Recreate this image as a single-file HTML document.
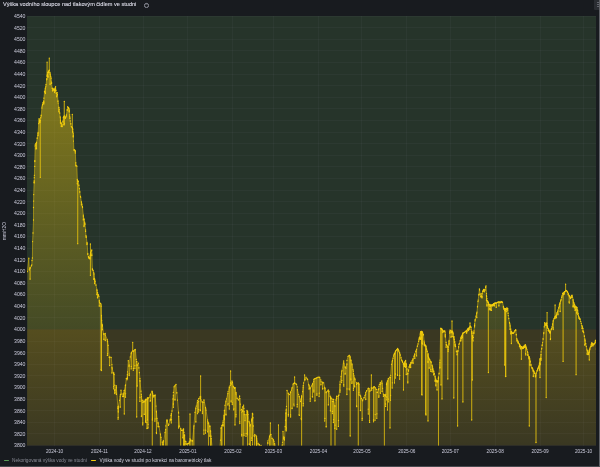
<!DOCTYPE html>
<html lang="cs"><head><meta charset="utf-8"><title>Výška vodního sloupce nad tlakovým čidlem ve studni</title>
<style>
html,body{margin:0;padding:0;background:#181b1f;}
body{width:600px;height:467px;overflow:hidden;position:relative;font-family:"Liberation Sans",sans-serif;color:#ccccdc;}
.panel{position:absolute;left:0;top:0;width:600px;height:467px;box-sizing:border-box;background:#181b1f;border-right:1.1px solid #606267;border-bottom:1.3px solid #484a4f;}
.title{position:absolute;left:2.9px;top:0.4px;font-size:5.58px;line-height:8px;font-weight:normal;color:#d8d8e4;-webkit-text-stroke:0.12px #d8d8e4;white-space:nowrap;letter-spacing:0;}
.info{position:absolute;left:143.6px;top:2.75px;width:2.7px;height:2.7px;border:0.4px solid #9496a0;border-radius:50%;font-size:2.6px;line-height:2.7px;text-align:center;color:#9d9fa8;}
.menu{position:absolute;left:594px;top:0;width:4.9px;height:10.1px;background:#2a2d32;border-radius:0 0 0 1px;overflow:hidden;}
.menu i{position:absolute;left:3px;width:3px;height:0.9px;background:#62656d;}
svg{position:absolute;left:0;top:0;will-change:transform;}
.title,.legend,.info{will-change:transform;}
.ax text{font-family:"Liberation Sans",sans-serif;font-size:5.17px;fill:#ccccdc;}
.legend{position:absolute;left:0;top:456.5px;font-size:4.78px;line-height:7px;white-space:nowrap;}
.legend span{position:absolute;top:0;}
.legend b{position:absolute;top:2.9px;width:5px;height:1.4px;border-radius:0.7px;}
</style></head><body>
<div class="panel">
<div class="title">Výška vodního sloupce nad tlakovým čidlem ve studni</div>
<div class="info">i</div>
<div class="menu"><i style="top:2px"></i><i style="top:3.9px"></i><i style="top:5.9px"></i></div>
<svg width="600" height="467" viewBox="0 0 600 467">
<defs>
<linearGradient id="g" gradientUnits="userSpaceOnUse" x1="0" y1="16" x2="0" y2="445.5">
<stop offset="0" stop-color="#F2CC0C" stop-opacity="0.54"/><stop offset="1" stop-color="#F2CC0C" stop-opacity="0"/>
</linearGradient>
<clipPath id="c"><rect x="27" y="16" width="569" height="429.5"/></clipPath>
</defs>
<rect x="27" y="16" width="569" height="313.4" fill="#26342a"/>
<rect x="27" y="329.4" width="569" height="116.1" fill="#3a3822"/>
<g stroke="#ccccdc" stroke-opacity="0.08" stroke-width="0.5" shape-rendering="crispEdges"><line x1="54.6" y1="16" x2="54.6" y2="445.5"/><line x1="99.5" y1="16" x2="99.5" y2="445.5"/><line x1="143.0" y1="16" x2="143.0" y2="445.5"/><line x1="187.9" y1="16" x2="187.9" y2="445.5"/><line x1="232.9" y1="16" x2="232.9" y2="445.5"/><line x1="273.4" y1="16" x2="273.4" y2="445.5"/><line x1="318.4" y1="16" x2="318.4" y2="445.5"/><line x1="361.9" y1="16" x2="361.9" y2="445.5"/><line x1="406.8" y1="16" x2="406.8" y2="445.5"/><line x1="450.3" y1="16" x2="450.3" y2="445.5"/><line x1="495.2" y1="16" x2="495.2" y2="445.5"/><line x1="540.1" y1="16" x2="540.1" y2="445.5"/><line x1="583.6" y1="16" x2="583.6" y2="445.5"/><line x1="27" y1="445.5" x2="596" y2="445.5"/><line x1="27" y1="433.9" x2="596" y2="433.9"/><line x1="27" y1="422.3" x2="596" y2="422.3"/><line x1="27" y1="410.7" x2="596" y2="410.7"/><line x1="27" y1="399.1" x2="596" y2="399.1"/><line x1="27" y1="387.5" x2="596" y2="387.5"/><line x1="27" y1="375.9" x2="596" y2="375.9"/><line x1="27" y1="364.2" x2="596" y2="364.2"/><line x1="27" y1="352.6" x2="596" y2="352.6"/><line x1="27" y1="341.0" x2="596" y2="341.0"/><line x1="27" y1="329.4" x2="596" y2="329.4"/><line x1="27" y1="317.8" x2="596" y2="317.8"/><line x1="27" y1="306.2" x2="596" y2="306.2"/><line x1="27" y1="294.6" x2="596" y2="294.6"/><line x1="27" y1="283.0" x2="596" y2="283.0"/><line x1="27" y1="271.4" x2="596" y2="271.4"/><line x1="27" y1="259.8" x2="596" y2="259.8"/><line x1="27" y1="248.2" x2="596" y2="248.2"/><line x1="27" y1="236.6" x2="596" y2="236.6"/><line x1="27" y1="224.9" x2="596" y2="224.9"/><line x1="27" y1="213.3" x2="596" y2="213.3"/><line x1="27" y1="201.7" x2="596" y2="201.7"/><line x1="27" y1="190.1" x2="596" y2="190.1"/><line x1="27" y1="178.5" x2="596" y2="178.5"/><line x1="27" y1="166.9" x2="596" y2="166.9"/><line x1="27" y1="155.3" x2="596" y2="155.3"/><line x1="27" y1="143.7" x2="596" y2="143.7"/><line x1="27" y1="132.1" x2="596" y2="132.1"/><line x1="27" y1="120.5" x2="596" y2="120.5"/><line x1="27" y1="108.9" x2="596" y2="108.9"/><line x1="27" y1="97.3" x2="596" y2="97.3"/><line x1="27" y1="85.6" x2="596" y2="85.6"/><line x1="27" y1="74.0" x2="596" y2="74.0"/><line x1="27" y1="62.4" x2="596" y2="62.4"/><line x1="27" y1="50.8" x2="596" y2="50.8"/><line x1="27" y1="39.2" x2="596" y2="39.2"/><line x1="27" y1="27.6" x2="596" y2="27.6"/><line x1="27" y1="16.0" x2="596" y2="16.0"/></g>
<g clip-path="url(#c)">
<path d="M27.4 271.7 L28.8 258.2 L29.3 270 L29.8 268 L30.1 268 L30.1 279.2 L30.2 268 L30.4 268 L31.2 266 L31.8 265 L32 260.5 L32.4 258 L32.6 241.6 L33 233 L33.5 220 L33.5 207.5 L33.6 201.1 L33.7 194.6 L34.1 182.5 L34.2 180.8 L34.2 182.9 L34.3 177.7 L34.4 175.3 L34.7 166.4 L34.8 160.6 L34.8 161.5 L35.1 146.1 L35.2 145.8 L35.2 144.8 L35.9 143.3 L36 149.1 L36 148 L36 143.5 L36.5 142.5 L36.5 148.5 L36.5 148.3 L36.6 142.3 L37.2 138 L37.2 138.3 L38 133.3 L38 135.7 L38.1 135.1 L38.1 132.4 L38.1 132.3 L38.7 123.7 L38.7 123.6 L39.1 118.7 L39.2 119 L39.2 122 L39.3 122.7 L39.3 120.1 L39.7 121.8 L39.7 121.3 L40 122.3 L40.2 120.2 L40.3 177.3 L40.3 120.2 L40.3 120.5 L40.3 120.2 L40.7 117.7 L40.7 118.1 L41.1 116 L41.2 115.2 L41.2 115.4 L41.9 107.9 L41.9 108 L42.1 106.1 L42.5 104.9 L42.5 104.3 L43.1 102.3 L43.1 103.1 L43.7 101.3 L43.7 101 L43.8 104 L43.9 102.3 L43.9 98.2 L44.5 92.1 L44.5 91.8 L44.5 91.4 L45.3 88.1 L45.4 93.5 L45.4 92.1 L45.4 88.1 L45.8 86.7 L46 84.6 L46 84.8 L46.6 79.8 L46.8 78.6 L46.8 79.4 L47.1 75.9 L47.1 62.1 L47.1 75.9 L47.2 76.6 L47.2 75.5 L47.4 74.3 L47.8 72.5 L48 72.2 L48 77.3 L48.1 76.2 L48.1 71.9 L48.6 71.1 L48.6 72.5 L48.8 72.2 L48.8 70.8 L49.2 70.2 L49.2 70.2 L49.2 70.6 L49.2 70.2 L49.3 58.1 L49.3 70.2 L50 72.6 L50.1 73.7 L50.1 84.6 L50.2 83.8 L50.2 74.5 L50.7 76.3 L50.7 76.2 L51.2 78.1 L51.2 78.1 L51.2 78.2 L51.6 82.2 L51.6 83.4 L52.2 88.5 L52.5 88.8 L52.5 90.8 L52.7 91 L52.7 88.1 L53.2 88.7 L53.2 89.7 L54.1 90.5 L54.1 89.5 L54.2 89.7 L54.6 88.9 L54.6 92.5 L54.6 92.2 L54.7 89.5 L55.2 88.3 L55.3 91 L55.3 90.3 L55.3 87.3 L55.6 86.6 L55.9 90.5 L55.9 90.1 L56.2 93.3 L56.6 92.9 L56.7 96.8 L56.8 96 L56.8 93 L57.2 92.6 L57.4 94.8 L57.4 94.6 L58 100.9 L58 101.4 L58.2 103.1 L58.8 107.3 L58.8 111.1 L58.9 111.8 L58.9 107.4 L59.2 109.6 L59.7 113 L59.7 113.2 L60.2 116.9 L60.4 118.1 L60.4 122.1 L60.5 123.2 L60.5 120 L61.2 123.7 L61.2 126.3 L61.3 126.5 L61.3 123 L62 124.8 L62 125.8 L62.3 126.6 L62.9 122.1 L62.9 121.2 L63.3 117.7 L63.7 116.9 L63.7 124.8 L63.8 124.8 L63.8 116.5 L64 116.2 L64.2 116 L64.3 101.4 L64.3 116 L64.3 116.2 L64.3 124.8 L64.5 123.3 L64.5 116.1 L64.7 116.1 L65.2 117.3 L65.2 118 L65.3 118.4 L65.8 117.3 L65.8 117.1 L66.3 116.1 L66.4 115.1 L66.4 114.9 L67.2 109.6 L67.2 110.3 L67.7 106.6 L68.1 107.5 L68.1 107.4 L68.6 108.7 L68.6 107.7 L69.1 108.9 L69.1 111.3 L69.2 111.9 L69.2 110.2 L69.3 110.3 L69.7 115 L69.7 116.6 L69.9 118.4 L69.9 116.8 L70.3 120.9 L70.8 124 L70.8 123.7 L71.3 126.6 L71.6 126.9 L71.6 126.9 L72 127.1 L72.2 127.5 L72.2 127.8 L72.2 127.5 L72.3 114.4 L72.3 127.5 L72.6 128.5 L72.6 128.6 L72.6 131.3 L72.7 132.3 L72.7 129.3 L72.7 129.6 L73.2 133.3 L73.2 136.4 L73.3 136.9 L73.3 134.9 L73.3 135.1 L73.5 141.1 L73.9 150.1 L74.1 150.3 L74.1 149.7 L74.7 150.1 L74.7 150 L75.2 150.4 L75.3 153.1 L75.3 153.1 L75.3 151.4 L75.8 162.6 L75.8 163.8 L75.9 165.9 L75.9 165.1 L75.9 165.3 L76.8 166.1 L76.8 166.1 L76.9 166.2 L77.3 179.5 L77.3 183.7 L77.4 184 L77.4 180.8 L77.7 180.7 L77.7 243.7 L77.8 180.7 L78 181.3 L78 181 L78.4 181.3 L78.9 185.1 L78.9 185.4 L79.4 188.7 L79.8 191.6 L79.8 192.2 L80.4 196.3 L80.6 197.2 L80.6 196.9 L81.4 202 L81.4 204.8 L81.5 205 L81.5 202 L81.9 204.2 L81.9 204.2 L82.4 206.5 L82.5 207.2 L82.5 207.5 L83.3 215.1 L83.3 219.9 L83.4 219.5 L83.4 216.2 L84 219 L84 226.5 L84.1 225.3 L84.1 219.4 L84.7 222.2 L84.7 223.8 L84.9 224.6 L84.9 223.3 L85.6 230 L85.6 231.4 L86 235.6 L86 235.7 L86 236.1 L86.2 237.4 L86.2 236.3 L87 242.5 L87 243.9 L87 244.6 L87.1 243.2 L87.8 253.4 L87.8 253.5 L87.8 254.4 L88.5 257.7 L88.5 256.3 L88.8 258 L89.3 257.2 L89.3 258.4 L90 257.2 L90 257.1 L90 259.1 L90.1 258.4 L90.1 255.3 L90.4 254 L90.4 244 L90.5 254 L90.4 254 L90.4 275.3 L90.5 254 L90.6 253.2 L90.6 255.8 L90.7 254.9 L90.7 252.4 L90.8 252.1 L91.4 250.9 L91.4 250.8 L91.8 250 L91.9 254.1 L91.9 255.5 L92.4 269.4 L92.4 269.6 L92.4 268.8 L93 270.6 L93 270.1 L93.7 272.3 L93.8 279.4 L93.9 278.7 L93.9 273.6 L94 273.9 L94.5 278.6 L94.6 283.1 L94.6 283.7 L94.7 279.2 L94.8 280.4 L95.1 281.7 L95.1 281.4 L96 285 L96 285.2 L96 285.2 L96.9 289.3 L96.9 294.5 L96.9 294.7 L97 290.5 L97.4 292.7 L97.5 297.1 L97.5 297.9 L97.6 292.6 L98.3 295.1 L98.3 294.6 L98.7 296 L98.7 296.1 L98.9 296.6 L99.3 300.4 L99.3 305.8 L99.3 306.2 L99.3 301.1 L99.5 302.7 L100.2 303.2 L100.2 303.3 L100.9 303.8 L101 304.8 L101 370 L101 304.8 L101.1 306.3 L101.5 315.3 L101.5 370.5 L101.5 315.3 L101.7 320.3 L102.2 324.3 L102.2 329.4 L102.4 329.8 L102.4 325.1 L102.5 326 L103.5 334 L103.8 333.8 L103.9 339.2 L103.9 339.6 L103.9 334.2 L105.2 333.4 L105.2 340.3 L105.3 340.5 L105.3 334.9 L107.2 339.5 L107.4 340.9 L107.4 355.4 L107.6 353.7 L107.6 341.6 L108.2 345.3 L109.2 357.3 L109.6 357.5 L109.6 365.4 L109.7 365.6 L109.7 356.8 L111.2 357.5 L111.9 364.7 L111.9 373.1 L112 373 L112 367.2 L112.2 368.8 L113.6 373.7 L113.6 388.8 L113.6 386.6 L113.7 372.7 L114.2 374.6 L114.7 385.2 L114.7 390.5 L114.8 393.5 L114.9 389.6 L115 392.6 L116.2 385.6 L116.3 386.9 L116.3 394.1 L116.4 394.4 L116.4 387.8 L118 408.6 L118.1 408.1 L118.1 419.2 L118.2 417.4 L118.2 407.2 L118.2 406.4 L118.3 412 L118.3 406.4 L119.5 400.4 L120.2 395.9 L120.2 407.2 L120.3 407.2 L120.4 394.5 L121 390.2 L121.9 393.8 L121.9 394.2 L122.5 396.6 L123.5 394 L123.5 396.6 L123.7 396.2 L123.7 393.9 L124 393 L124.2 390.4 L124.3 414 L124.3 390.4 L125.4 385.4 L125.5 397.2 L125.6 393.8 L125.6 385 L126.3 378.3 L127 379.8 L127.4 374.2 L127.4 378.7 L127.5 377.9 L127.5 371.9 L128.3 360.7 L129 366.3 L129.1 365.3 L129.2 375.5 L129.2 373.8 L129.2 364.8 L130.3 356.9 L131.2 353.5 L131.2 368.9 L131.3 366.5 L131.3 353 L131.5 352.2 L132.6 351.2 L132.7 342.3 L132.8 351.2 L133.3 351 L133.3 370.3 L133.4 368.4 L133.4 351.3 L133.9 350.9 L134.8 349.6 L134.9 368.6 L134.9 365.7 L135 349.9 L135.3 349.4 L136.3 359.4 L136.6 361.6 L136.7 417 L136.8 361.6 L137 365 L137.1 364.8 L137.1 386.2 L137.2 385.8 L137.2 365.4 L138.4 363.1 L138.9 367.6 L138.9 368.1 L139.4 372.7 L139.9 378.5 L139.9 401.4 L139.9 397.3 L139.9 380.2 L140 381.2 L141 391.2 L141.3 394.5 L141.4 416.5 L141.5 415.8 L141.5 396.2 L142 400.8 L142.7 402.6 L142.7 424.9 L142.8 423 L142.8 400.1 L143.5 402 L144.1 401.2 L144.1 414.2 L144.3 414.4 L144.3 401.9 L145 400.9 L145.4 399.5 L145.5 422 L145.6 399.5 L145.7 400.3 L145.7 420.7 L145.8 422.3 L145.8 400.5 L146.9 399.4 L147 428.5 L147 422.7 L147 399 L147 398.9 L147.4 397.8 L147.5 420 L147.6 397.8 L148 398.5 L148 428 L148.1 424.3 L148.1 398.1 L149 397.6 L150.2 395.2 L150.2 401.2 L150.4 400.7 L150.4 394.5 L150.5 394.2 L152 391.2 L152.2 391.8 L152.3 452 L152.4 391.8 L152.3 392.2 L152.4 420 L152.5 418.1 L152.6 393.3 L153.5 395.8 L153.8 395.5 L153.8 397 L154.9 395.5 L154.9 421.2 L155.1 418.9 L155.1 395 L156 406.1 L156.4 411.2 L156.4 432.4 L156.5 433.5 L156.5 412 L157 418.4 L158 422.5 L158.1 426.8 L158.1 426.7 L158.1 423.2 L159 426.7 L160.3 433.8 L160.3 452 L160.5 452 L160.5 434.6 L161 437.4 L162.2 441.8 L162.3 452 L162.3 452 L162.3 442.2 L163 444.5 L163.5 440.7 L163.6 452 L163.7 452 L163.7 441.8 L165 432.6 L165.6 429.4 L165.7 452 L165.8 450.8 L165.8 425.9 L166.9 420 L167 452 L167.1 420 L167 420.1 L167.1 420.4 L167.1 421.7 L168.5 425.4 L168.8 424.6 L168.8 424.1 L170 420.8 L170.3 419.2 L170.3 419.9 L171 415.5 L171.3 413.7 L171.3 422.9 L171.5 419.7 L171.5 413.8 L172 411 L173 399 L173.4 395.2 L173.4 407.3 L173.4 404 L173.4 392.4 L174 386.8 L175 385.8 L175 400.1 L175 399.4 L175.1 385.4 L176 384.4 L176.8 393 L176.8 392.7 L177.5 400.1 L178.5 412.1 L178.6 413 L178.6 428 L178.7 426.2 L178.7 416.4 L179.5 426.1 L180.6 428.8 L180.6 452 L180.8 452 L180.8 428.7 L181.5 430.4 L182.8 430.4 L182.8 437.3 L182.9 437.9 L182.9 429.9 L183.4 429 L183.5 452 L183.6 429 L183.5 429.9 L183.9 432.5 L184 445 L184.1 443.9 L184.1 436 L184.4 435 L184.5 452 L184.6 435 L185 441.1 L185.7 443.8 L185.7 452 L185.8 452 L185.8 441.4 L186.5 444.2 L187.5 443.7 L187.5 452 L187.7 452 L187.7 443.9 L188.5 443.5 L189.4 441.1 L189.4 449.4 L189.5 447.7 L189.5 442.9 L189.6 442.6 L189.9 439 L190 414 L190.1 439 L190.4 440.6 L190.7 440.9 L190.7 449.5 L190.9 448.5 L190.9 440 L192.3 441.3 L192.3 451 L192.4 449.7 L192.4 440.6 L192.5 440.7 L193.8 427.8 L193.8 452 L193.9 452 L193.9 426.5 L194 425.3 L195 412.3 L195.8 408.6 L195.8 421.9 L195.9 422 L195.9 407.9 L196.3 406.1 L197.5 400.3 L197.5 413.7 L197.5 413.7 L197.6 402.6 L198.6 401.3 L198.6 412.1 L198.6 409.7 L198.6 398.8 L199 398.3 L200.2 396.3 L200.3 396.6 L200.3 409.9 L200.4 410.7 L200.4 398.5 L200.5 397 L200.6 376 L200.7 397 L201 400 L202 402 L202.4 402 L202.4 413.6 L202.5 411.9 L202.5 402.2 L203.8 402.2 L203.9 434.2 L203.9 430.1 L203.9 400 L204 400 L205.5 407.4 L205.5 433.2 L205.7 430.2 L205.7 408.6 L206 410.2 L207.6 419.8 L207.6 431.9 L207.7 431.8 L207.7 421.2 L208 423.1 L208.4 423 L208.5 452 L208.6 423 L209.7 426.5 L209.7 436.2 L209.9 435.8 L209.9 425.9 L210 426.1 L210.4 431 L210.5 452 L210.6 431 L211 436.1 L211 436.3 L211 452 L211.2 452 L211.2 438.5 L212 446.2 L212.4 448.7 L212.4 448 L213 452 L213.8 452 L213.8 452 L214.7 452 L214.7 452 L216.3 452 L216.3 452 L217.4 452 L217.4 452 L218.3 452 L218.3 452 L219.3 452 L219.3 452 L219.5 452 L220.5 440.2 L221 428.2 L221.2 427.6 L221.2 447.6 L221.4 446.7 L221.4 428 L221.9 425.3 L222 452 L222.1 425.3 L222.5 425 L223.1 422.4 L223.1 426 L223.2 425 L223.2 420.9 L224 417 L224.1 415.1 L224.2 419.7 L224.2 418.3 L224.2 415.4 L224.4 410.5 L224.5 452 L224.6 410.5 L225 405.3 L225.9 401.6 L225.9 414.2 L226 415 L226.1 400.8 L226.5 399 L227.9 393.4 L227.9 405 L228.1 403.6 L228.1 391.7 L229.3 387 L229.3 409.1 L229.4 405.8 L229.5 387.6 L229.5 387.4 L230.2 385.4 L230.5 383 L230.6 371 L230.7 383 L231 383.4 L231.1 383.1 L231.1 401.9 L231.1 400.8 L231.1 384.5 L232 381 L232.3 382.2 L232.3 404.6 L232.4 402.8 L232.5 382.4 L233.3 386.3 L233.7 386.9 L233.7 409.9 L233.9 408.8 L233.9 387.3 L234.6 388.4 L234.9 387.7 L235 425 L235.1 387.7 L235.9 393.9 L235.9 416.9 L236 414.7 L236 392.3 L237 398.2 L237.2 398.5 L237.2 398.3 L238.3 399.7 L238.3 399.7 L238.5 400 L239.6 396 L239.6 396.4 L239.7 421.8 L239.8 423.6 L239.8 398.4 L240.3 404.2 L241 410.2 L241.6 409.3 L241.7 434.5 L241.8 436 L241.8 412.1 L242.5 411.2 L242.8 410.3 L242.8 407.2 L242.9 406.6 L243 452 L243.1 406.6 L243.6 405.1 L243.9 408.5 L243.9 433.8 L244 435.7 L244.1 411.5 L244.3 414.7 L245 420.7 L246 414.7 L246 414.6 L246 436.3 L246.1 433.6 L246.1 414.7 L247 410.3 L247.4 412.1 L247.4 433.2 L247.4 411.5 L247.5 452 L247.6 411.5 L247.5 434.8 L247.6 412.4 L248 414.5 L249 421.5 L249.3 422.8 L249.3 444.6 L249.3 443.8 L249.3 422.6 L250 426.1 L250.3 424.8 L250.4 447.1 L250.5 445.7 L250.5 424.8 L251.5 420.9 L251.8 418.9 L251.8 440.4 L251.8 438 L251.9 419.9 L252.4 413.3 L252.5 445 L252.6 413.3 L252.7 414.3 L252.9 417.9 L252.9 417.6 L253.3 426 L254 436 L254.6 436.2 L254.6 452 L254.7 452 L254.7 434.6 L256 435.3 L256.4 436.7 L256.4 452 L256.4 436.8 L256.5 452 L256.6 436.8 L256.6 452 L256.6 438.4 L258 443.4 L258 452 L258 452 L258 443.8 L259.3 444.5 L259.3 452 L259.4 452 L259.4 445 L260 445.3 L261 446.7 L261 452 L261.1 452 L261.2 445.4 L262 446.6 L262.8 451.3 L262.8 451 L263 452 L264 452 L264 452 L265.8 452 L265.8 452 L266.5 452 L267.8 443.4 L267.8 442.4 L268 440.8 L269.5 436.8 L269.6 436.7 L269.7 450 L269.7 451.1 L269.7 436.1 L270.1 435.1 L270.2 452 L270.2 435.1 L270.3 434.8 L270.4 423 L270.4 434.8 L271 434.4 L271.9 438.2 L271.9 448.5 L272.1 448.2 L272.1 438.4 L273.3 439.5 L273.3 450.5 L273.4 449.9 L273.5 440.6 L274 441.2 L274.6 443.7 L274.7 452 L274.8 452 L274.8 445 L275.5 447.7 L276.3 452 L276.3 452 L276.5 452 L277.5 452 L277.5 452 L278.1 452 L278.4 452 L278.5 425 L278.6 452 L278.9 452 L279.3 452 L279.3 452 L280.8 452 L280.8 452 L281.5 452 L282.2 445.6 L282.2 452 L282.3 452 L282.3 445 L282.5 442.3 L283 431.3 L283.7 438.3 L283.8 439.1 L283.8 436.8 L283.9 437.5 L284 452 L284.1 437.5 L284.5 440 L285.2 426.5 L285.2 426.7 L285.5 420.2 L285.9 413 L286 430 L286.1 413 L286.2 410.2 L286.2 430.9 L286.3 428 L286.3 409.2 L286.5 406.4 L287 390.4 L288.2 393.4 L288.3 393.5 L288.3 416.1 L288.4 414.5 L288.4 393.8 L289.5 394.6 L290.5 392.6 L290.6 392.4 L290.6 414.9 L290.6 417 L290.6 391.8 L291.5 390.1 L292 388.1 L292 408.7 L292.1 408.2 L292.2 387.5 L293 384.1 L293.8 383.5 L293.8 404.1 L294 405.9 L294 383.4 L294.2 383.3 L294.6 383 L294.6 377 L294.7 383 L295 383.3 L296.2 384 L296.2 384.4 L296.6 384.6 L297.2 386.9 L297.2 407 L297.3 404.4 L297.4 389.7 L298.6 394.6 L299.1 396.7 L299.1 414.8 L299.3 415.4 L299.3 396.3 L300.6 401.5 L301.2 399 L301.2 418.3 L301.4 419.7 L301.4 398.4 L301.6 396 L301.6 452 L301.7 396 L301.6 397.6 L302.6 391.6 L303.2 387 L303.2 405.9 L303.3 403.6 L303.3 385.4 L303.6 383 L304.6 379.9 L304.6 375 L304.7 379.9 L305 380 L305 379.2 L306 377.2 L307 378.5 L307 378.8 L307.6 379.5 L308.7 384.5 L309 385.5 L309 389.1 L309.1 389.2 L309.1 385.8 L309.7 388.1 L310.1 387.2 L310.2 401.3 L310.3 398.8 L310.3 388.6 L311.7 385.9 L312.4 384.4 L312.4 396.7 L312.6 397 L312.6 383.6 L313.7 381.1 L313.8 392 L313.8 390.2 L313.8 379.5 L314 379.1 L314.9 378.7 L314.9 401.1 L315 400.6 L315 378.7 L316 378.2 L316.8 377.8 L316.9 395.3 L316.9 393.9 L317 377.7 L318 377.2 L319.1 377.2 L319.1 396.6 L319.3 393.2 L319.3 377.4 L319.7 377.4 L320.8 380 L320.8 384.8 L321 384.7 L321 381.6 L322.5 382.8 L322.6 389.1 L322.7 388.4 L322.7 382.1 L323.7 382.8 L324.7 387.4 L324.7 421.1 L324.9 418.4 L324.9 388.2 L325 388.7 L326 392.7 L326.2 392.6 L326.2 426.4 L326.2 426.9 L326.3 391.9 L327.5 391.1 L328.3 390 L328.3 405 L328.4 404.8 L328.5 391.9 L329 391.2 L330 396.2 L330.4 397.8 L330.4 410.6 L330.5 410.9 L330.6 396.8 L330.9 398 L331 452 L331.1 398 L331 398.6 L332.3 399.1 L332.4 413.6 L332.4 411.4 L332.4 401.4 L333.4 401.7 L333.4 422.5 L333.5 419.7 L333.5 399.5 L333.7 399.5 L334.8 405.4 L334.8 428.5 L335 425.2 L334.9 406 L335 452 L335.1 406 L335 406 L336 400 L336.6 396.2 L336.7 429.3 L336.7 429.1 L336.7 398.4 L337 396.6 L338.4 395.9 L338.4 426.4 L338.5 420.5 L338.5 395.5 L339 395.2 L340 384.2 L340 384.1 L340 392.2 L340.1 390.1 L340.1 381.9 L341 376.6 L341.6 372.8 L341.6 382.6 L341.8 380.5 L341.8 371.4 L342 370.4 L343.7 360.9 L343.7 384.7 L343.8 386.2 L343.8 362.9 L345 366.8 L345.1 366.8 L345.1 374.2 L345.2 373.3 L345.2 367.4 L346 368.2 L346.9 363.9 L346.9 394.5 L347 388.9 L347 360.5 L347 360.4 L348 356.4 L349.1 355.4 L349.2 388.8 L349.3 389.8 L349.3 355.6 L349.6 355.3 L350.1 356.9 L350.2 436 L350.2 356.9 L350.8 359.9 L350.8 378.9 L350.9 380 L351 360.4 L351 360.5 L351.9 364 L351.9 383.4 L352 382 L352 364.6 L352 364.7 L353 369.7 L353.4 371.2 L353.4 390.3 L353.5 388.3 L353.5 373.7 L354 375.8 L354.6 378.1 L354.6 386 L354.7 386.9 L354.7 378.2 L355 379.5 L356.6 384.4 L356.6 405.9 L356.7 406.7 L356.7 382.7 L357 383.6 L358.2 383 L358.3 452 L358.4 383 L358.8 383.6 L358.8 394.9 L358.9 392.6 L359 384.2 L359 384.2 L360 395.2 L360.4 396.1 L360.4 410.5 L360.5 410.4 L360.6 396 L361.5 398.4 L362.1 399.4 L362.1 420.3 L362.2 418.5 L362.2 400.1 L362.7 400.8 L364 397.8 L364.1 397.4 L364.1 397.8 L365 395.3 L365.7 393.9 L365.7 399.6 L365.8 399.1 L365.8 392.5 L366.5 391.1 L366.7 390.7 L366.7 391.1 L368 388.6 L368.3 388.7 L368.3 414.1 L368.3 409.2 L368.4 388.2 L369.5 388.8 L369.5 420.7 L369.6 422.4 L369.6 391 L370 391.2 L371 390.2 L371.3 388 L371.4 375 L371.4 388 L371.7 390.2 L371.7 388.1 L371.8 388.1 L372.4 388.1 L373.5 387 L373.5 420 L373.6 421.8 L373.6 387.5 L374.4 386.7 L375 387.8 L375 420.3 L375.2 414.6 L375.2 387.6 L376 389.1 L376.8 389.7 L376.8 418.3 L376.9 413.8 L376.9 392.2 L377.4 392.5 L378.5 389.5 L378.8 388.7 L378.8 397.3 L378.9 396 L378.9 386.3 L379.4 384.6 L380.3 382.3 L380.3 393 L380.5 393.3 L380.5 384.2 L380.6 383.9 L381.8 380.9 L382 383 L382 391.3 L382.1 391.6 L382.1 383.1 L382.6 388.3 L383.4 396.3 L383.5 396.4 L383.5 394.1 L384.3 395 L384.4 452 L384.4 395 L385.5 396 L385.6 395.3 L385.6 406.4 L385.6 404 L385.7 394.5 L386.5 384.5 L386.7 383.8 L386.7 399.9 L386.8 397 L386.8 383 L387.4 381 L387.5 410 L387.6 381 L388.3 378.7 L388.3 401.9 L388.4 399.1 L388.4 378.7 L388.5 378.4 L389.9 377.2 L390 428 L390.1 377.2 L390.5 377.5 L390.5 400.3 L390.6 395.3 L390.7 375.3 L391.5 364.3 L392.2 361.6 L392.2 388.1 L392.4 382.8 L392.4 360.6 L392.5 360.2 L393 358.3 L393 358.2 L393.5 356 L393.5 356 L393.5 355.9 L394.1 354.4 L394.1 354.6 L394.4 353.5 L394.5 383 L394.6 353.5 L394.9 352.9 L394.9 352.8 L395.4 351.5 L395.4 378.1 L395.5 374 L395.6 351.1 L396 350.4 L396 350.6 L396.6 349.8 L396.6 349.7 L397.5 348.4 L397.5 374.9 L397.6 375.4 L397.6 349 L398 349.8 L398 349 L398.5 350 L398.9 350.9 L398.9 351.6 L399.5 352.7 L399.6 353.1 L399.6 379.2 L399.7 375.5 L399.7 352.8 L400.3 355 L400.3 355.2 L401 357.5 L401 358.1 L401.5 359.8 L401.9 360.8 L401.9 360.2 L402.5 361.7 L402.5 362.3 L403.4 364 L403.5 390 L403.6 364 L403.5 364.8 L403.5 364.7 L403.5 364 L404.2 362.7 L404.2 366.5 L404.4 366.6 L404.4 364.4 L404.8 363.6 L404.8 365.5 L404.9 365 L404.9 361.7 L405.5 360.7 L405.5 367.3 L405.6 366.7 L405.6 360.3 L406.2 363.7 L406.2 374.3 L406.3 374.5 L406.4 364.6 L406.6 366.1 L407 368.8 L407 369.8 L407.6 374.1 L407.8 373.3 L407.8 382.9 L407.8 381.8 L407.9 373.7 L408.5 371.2 L408.5 370.3 L408.6 369.9 L409.2 367.4 L409.2 366.6 L409.6 365.1 L410 364.3 L410 365.9 L410.6 364.6 L410.6 367.6 L410.7 367.1 L410.7 363 L411 362.4 L411.1 362.2 L411.1 363.4 L412.1 362.2 L412.1 360.7 L412.6 360.1 L413 358.8 L413 363.4 L413.1 363 L413.1 358.9 L414.1 356 L414.1 356.4 L414.6 354.8 L414.7 354.5 L414.8 358.4 L414.8 358.1 L414.8 353.9 L415.8 351.5 L415.8 351.1 L416.5 349.3 L416.5 355.9 L416.6 355.9 L416.6 349.4 L416.6 349.4 L417.4 346 L417.4 346.3 L418 344.1 L418 343.9 L418.6 341.4 L418.9 339.9 L418.9 339.7 L419.3 337.6 L419.3 338.5 L419.6 337.1 L420.3 333.9 L420.3 339.4 L420.4 338.4 L420.4 332.9 L420.7 331.6 L421 331.7 L421 339.1 L421.1 337.7 L421.1 332.2 L421.6 331.5 L421.7 394.5 L421.8 331.5 L421.7 332.5 L421.8 343.1 L421.8 343.2 L421.9 331.9 L421.9 331.6 L422 395 L422.1 331.6 L422.3 332.2 L422.4 343.5 L422.4 344.1 L422.4 332.7 L422.7 332.8 L423.4 334.4 L423.4 334.5 L423.5 334.9 L424.1 341.2 L424.2 344.3 L424.3 345.8 L424.3 342.7 L424.4 344 L425 345.1 L425 344.6 L425.5 345.5 L425.6 345.7 L425.7 414 L425.8 345.7 L425.8 346.4 L425.8 346.3 L425.9 346.7 L426 415 L426.1 346.7 L426.6 349 L426.6 349.5 L427 350.8 L427.2 351.7 L427.2 351.2 L427.9 353.8 L428 361.7 L428 362.5 L427.9 353.8 L428 421 L428.1 353.8 L428 355.9 L428.6 358.1 L428.6 357.2 L429 358.7 L429.1 358.9 L429.1 368.3 L429.2 368 L429.2 358.8 L429.8 359.9 L429.8 359.7 L430.6 361.4 L430.7 371.3 L430.8 369.5 L430.8 361.3 L431 361.8 L431.2 362.5 L431.2 362.6 L432 365.2 L432 371.4 L432.2 372 L432.2 365.7 L432.6 367 L432.6 369.5 L432.7 370.1 L432.7 368.3 L433 369.1 L433.6 371.4 L433.6 374.9 L433.7 374.5 L433.7 371 L434.3 373.5 L434.3 373.4 L434.5 374 L435 376.2 L435.1 380.7 L435.2 381.6 L435.2 376.8 L435.7 379 L435.8 384.8 L435.9 385.9 L435.9 379.8 L436 380.1 L436.5 380.7 L436.5 381.4 L437 381.9 L437 389.9 L437.1 390 L437.2 381.4 L437.7 382 L437.9 380.7 L437.9 381.5 L438.4 378.3 L438.4 378.8 L438.4 377.1 L438.5 452 L438.6 377.1 L438.5 378.2 L438.5 377 L439 374.1 L439.1 373.1 L439.1 373.8 L439.9 362.2 L439.9 368 L440 367.3 L440 360.2 L440.7 328.5 L440.8 328.6 L440.8 328.7 L440.9 328.3 L441 385 L441.1 328.3 L441.4 329.3 L441.4 328.8 L441.9 329.1 L442 399 L442.1 329.1 L442.1 329.4 L442.1 329.8 L442.7 330.3 L442.7 332.6 L442.8 332.5 L442.8 330.7 L443 330.9 L443.3 331 L443.3 331.3 L444.1 331.7 L444.1 331 L444.7 331.3 L444.7 330.9 L445 331.1 L445.2 332.8 L445.2 335.8 L445.3 337 L445.3 334.6 L446 342.3 L446.1 342.4 L446.1 347.3 L446.1 347.2 L446.2 344.1 L446.6 345.3 L446.6 344.3 L447.5 346.4 L447.5 346.3 L447.8 346.5 L447.8 379 L447.9 346.5 L448 347.6 L448.1 347.1 L448.1 351.6 L448.2 349.7 L448.2 347 L449 341.7 L449 341.5 L449 345 L449.1 343.3 L449.1 340.5 L449.8 331.7 L449.8 333.3 L449.9 333 L449.9 330.1 L450.5 330.5 L450.5 330.7 L451 331 L451 337.3 L451.2 336.4 L451.2 332.5 L451.5 332.7 L451.7 332.7 L451.7 332 L451.9 331 L452 321 L452.1 331 L452.1 332 L452.1 331.3 L452.5 331.3 L452.7 331.9 L452.7 336.7 L452.8 336.3 L452.8 332.4 L453 333.1 L453.2 334 L453.2 333.9 L453.7 336.4 L453.7 337.8 L453.8 336.6 L453.8 398 L453.9 336.6 L454.2 339.7 L454.2 339.2 L454.7 341.4 L454.7 342.4 L455 343.9 L455 344 L455 345.2 L455.2 346.4 L455.2 344.1 L455.6 346.4 L455.6 346.6 L456.4 351.7 L456.4 351.1 L457 354.8 L457.1 354.6 L457.1 354.7 L457.6 351.3 L457.6 426 L457.7 351.3 L457.9 350.3 L457.9 351.4 L458.6 347.8 L458.6 346.6 L459 344.4 L459.3 343.5 L459.3 343.4 L460 340.8 L460 340.8 L460.8 338.1 L460.8 341 L460.8 340.3 L460.9 337.7 L461 337.2 L461.7 335.8 L461.7 338.8 L461.7 338.7 L461.8 336.5 L462.4 335.3 L462.4 337.4 L462.4 337.3 L462.4 334.4 L462.8 333.2 L462.9 402 L462.9 333.2 L463 333.3 L463.1 333.2 L463.1 333.1 L463.6 332.8 L463.6 332.9 L464.4 332.4 L464.4 332.3 L465.2 331.8 L465.2 331.6 L465.5 331.4 L465.5 331.4 L466 331.1 L466 331 L466 331.7 L466.5 331 L466.5 333.2 L466.7 333 L466.7 332.1 L467.1 331.5 L467.1 330 L467.5 329.4 L467.5 329.8 L467.6 329.6 L467.7 329 L468 328.5 L468.5 328.2 L468.5 330.5 L468.6 330 L468.7 329.2 L469.1 328.9 L469.1 329.2 L469.5 329 L469.5 328.9 L469.5 327.4 L469.9 326.5 L470 323 L470.1 326.5 L470.1 326.9 L470.1 327.1 L470.5 326.6 L470.6 326.8 L470.6 326.2 L471 327.1 L471.1 327.4 L471.1 329.2 L471.6 331.2 L471.7 420 L471.8 331.2 L471.8 333.8 L471.8 332.1 L472 333.2 L472.2 335.4 L472.3 380 L472.4 335.4 L472.4 336.5 L472.4 338.7 L472.5 339 L472.5 336.9 L473 341 L473.3 337.4 L473.3 337.4 L473.8 332.5 L473.8 333.5 L474 331 L474.5 325.5 L474.6 326.9 L474.7 325.6 L474.7 324 L475 320.9 L475.2 320.1 L475.2 319.3 L476 316.1 L476 316.2 L476.6 313.7 L476.7 317.7 L476.8 317.3 L476.9 312.7 L477 312.1 L477.5 306.5 L477.5 306.9 L478 301.5 L478.2 300.1 L478.2 300.1 L478.8 295.1 L478.8 294.5 L479.4 289 L479.6 290 L479.6 290.1 L480.1 293.7 L480.1 294.2 L480.2 294.7 L480.8 296.8 L480.8 296.2 L481 297.1 L481.3 295.8 L481.3 296 L481.9 293.5 L482 297.9 L482.1 296.7 L482.1 293.7 L482.7 291.4 L482.7 291.7 L483 290.4 L483.5 290.8 L483.5 289.5 L484.2 290 L484.2 291.6 L484.5 291.8 L485 290.2 L485 289.4 L485.6 287.6 L485.6 286.9 L486 285.8 L486.5 293.7 L486.5 300 L486.5 300.7 L486.5 295.4 L486.6 296.4 L486.9 298.6 L486.9 304.9 L487 306.1 L487 300.5 L487.7 302.2 L487.7 301.1 L488.3 302.5 L488.4 372.5 L488.4 302.5 L488.5 303 L488.5 304.4 L489 305.7 L489.2 305.8 L489.2 309.8 L489.4 308.7 L489.4 304.3 L490 304.5 L490 306.2 L490.4 306.4 L490.5 310 L490.5 308.9 L490.5 304.9 L490.9 305.1 L490.9 305.4 L491.4 305.6 L491.4 310.3 L491.5 310.4 L491.5 304.9 L492 305 L492.3 304.7 L492.3 306 L492.7 305.6 L492.7 304.7 L493.1 304.4 L493.1 304.1 L493.6 303.6 L493.6 305 L494 304.6 L494.2 304.6 L494.2 306.1 L494.3 305.5 L494.3 303.5 L494.8 303.5 L494.8 303 L495.3 303 L495.3 303 L495.8 303 L495.8 303.3 L496 303.3 L496.2 303.2 L496.2 307.4 L496.3 307.2 L496.3 303.1 L497 302.8 L497 302.6 L497.8 302.2 L497.8 302.4 L498 302.2 L498.4 302 L498.4 302.1 L498.9 301.9 L498.9 306.1 L498.9 305.6 L499 302.2 L499.7 301.8 L499.7 302.5 L500 302.4 L500.3 302.5 L500.3 302.4 L501 302.6 L501 301.4 L501.9 301.6 L501.9 302 L502.5 302.2 L502.5 302.4 L502.5 302.2 L503.4 306.4 L503.4 307.3 L503.7 309.1 L503.8 309.2 L503.8 308.6 L504.2 308.8 L504.2 308.7 L504.6 308.4 L504.6 365 L504.7 308.4 L504.7 309 L504.7 310.5 L505.4 310.8 L505.4 309.3 L505.4 308.9 L505.5 376.5 L505.6 308.9 L505.8 309 L505.8 376.4 L505.9 309 L505.8 309.5 L505.9 309.3 L505.9 309.2 L506.7 307.9 L506.7 311.7 L506.8 311.4 L506.8 309.3 L507.3 308.5 L507.3 308.5 L507.5 308.1 L507.7 310.2 L507.7 308.4 L508.1 313.1 L508.1 313.4 L508.3 315.6 L508.8 318.4 L508.8 318.6 L509.5 323 L509.5 322.3 L509.7 323.5 L510 325 L510 329.2 L510.1 329.4 L510.1 325.9 L510.8 329.1 L510.8 332.9 L510.9 334 L510.9 330.8 L511.3 332.6 L511.3 331.4 L511.3 331.8 L511.4 343.5 L511.4 331.8 L511.4 331.9 L511.7 332 L511.7 333 L512.1 333.1 L512.1 333.2 L512.7 333.4 L512.7 332.9 L513.2 333.1 L513.2 333.3 L513.4 333.3 L514 332.6 L514 332.2 L514.8 331.1 L514.8 330.7 L515.6 329.6 L515.6 330.5 L515.9 330.1 L516.3 334.9 L516.3 334.3 L516.7 338.6 L516.8 338.8 L516.8 340.9 L516.9 340.8 L516.9 339 L517.7 340.7 L517.8 342.8 L517.9 342.8 L518 341.5 L518.3 342.2 L518.3 342.3 L518.4 342.5 L518.9 343.5 L518.9 343.7 L519.5 344.9 L519.5 346.3 L519.5 346.4 L519.6 344.3 L520.1 345.4 L520.1 347.8 L520.7 348.9 L520.7 346.5 L520.9 347 L521.1 346.9 L521.1 347.2 L521.4 346.6 L521.4 359.2 L521.4 346.6 L521.6 347 L521.6 347.2 L522.1 347.1 L522.1 348.7 L522.5 348.5 L522.5 348.6 L522.7 348.3 L522.7 347.5 L523.2 347.4 L523.2 348.4 L523.4 348.2 L523.4 346.6 L523.4 346.6 L524 346 L524 347.5 L524.5 347 L524.6 347.3 L524.7 346.9 L524.8 345.2 L525.1 344.9 L525.1 346.8 L525.2 346.8 L525.2 344.8 L525.4 344.6 L525.6 345.3 L525.6 353.6 L525.8 355 L525.8 346.2 L526.2 347.5 L526.2 347.3 L526.5 348.6 L526.5 348.3 L526.9 349.6 L526.9 349.8 L527.5 351.7 L527.7 352.4 L527.7 355.1 L527.9 355.4 L527.9 354 L528.7 356.6 L528.7 357.8 L529.1 358.9 L529.1 356.6 L529.2 356.9 L529.2 357.1 L529.3 426 L529.3 357.1 L529.6 358.4 L529.6 365 L529.7 365 L529.7 358.8 L530.3 361.2 L530.3 362.1 L530.9 364.3 L531 364.7 L531 365.7 L531.9 368.1 L531.9 367.5 L532.4 369 L532.4 367.9 L532.6 368.6 L532.9 369.2 L532.9 370.7 L533.3 371.5 L533.3 376.6 L533.4 375.9 L533.4 370.3 L533.8 371.2 L533.8 371 L534.2 371.8 L534.6 373 L534.6 373.4 L535.3 375.3 L535.3 376.7 L535.4 376.9 L535.7 376.1 L535.7 374.9 L536 373.1 L536 442.5 L536 373.1 L536.3 372.9 L536.3 373 L537 370.8 L537 370.7 L537 371.2 L537.6 369.8 L537.6 368.9 L538.3 367.4 L538.3 368.3 L538.8 367.2 L538.8 366.2 L539.2 365.3 L539.4 363.8 L539.4 370.3 L539.5 369.1 L539.5 363 L540 359 L540 377.6 L540 359 L540.2 358.4 L540.2 364.7 L540.3 363.8 L540.3 359.2 L540.4 358.3 L541 354.5 L541.1 360.2 L541.1 358.6 L541.1 351.9 L541.6 349 L541.6 349.1 L541.7 348.4 L542.2 344.8 L542.2 345.6 L542.6 342.7 L543.1 339.3 L543.1 338.7 L543.7 333.7 L543.8 332.6 L543.8 332.7 L544.3 326.9 L544.3 326.6 L544.7 322.6 L544.9 322.9 L544.9 325.2 L544.9 325.3 L545 323.3 L545.8 324.9 L545.8 324.9 L545.9 325.1 L546.2 323.9 L546.2 397.6 L546.2 323.9 L546.4 323.3 L546.4 325.5 L546.5 325.3 L546.5 323.6 L546.7 322.8 L547.1 324 L547.1 312.6 L547.1 324 L547.3 325.7 L547.3 327.2 L547.5 328 L547.5 326.2 L548.1 328.6 L548.2 328.7 L548.2 330.3 L548.6 331 L548.6 329.2 L549.2 330.3 L549.2 330.8 L549.6 331.5 L549.6 332.5 L550.1 333.3 L550.4 332.4 L550.4 339.5 L550.5 338.7 L550.5 331.2 L551.3 328.8 L551.3 329.7 L551.8 328.3 L552.1 327 L552.1 326.7 L552.5 325.1 L552.5 324 L553.2 320.9 L553.2 329.5 L553.2 327.8 L553.3 320.6 L553.4 320.1 L554 318.7 L554 318.7 L554.7 317.1 L554.7 317.1 L554.7 318.7 L555.1 316.5 L555.1 305 L555.1 316.5 L555.3 318 L555.3 316.4 L555.5 316.1 L555.9 316.1 L556 315.7 L556 316.4 L556.4 315.3 L556.4 317.8 L556.5 317.3 L556.5 314.2 L557.1 312.5 L557.1 313.1 L557.6 311.7 L557.9 310.8 L557.9 314.8 L558 314.1 L558.1 309.8 L558.8 307.3 L558.8 308.3 L559.3 306.4 L559.3 306.3 L559.3 305 L559.7 303.9 L559.7 304 L560.1 302.9 L560.1 311.5 L560.2 311.4 L560.2 302.3 L560.6 300.9 L560.6 301.2 L560.9 300.4 L561.1 299.8 L561.1 299.4 L561.7 297.1 L561.7 297.6 L562.1 295.9 L562.1 295.7 L562.6 293.7 L562.8 293.4 L562.8 293.9 L563.1 292.9 L563.1 361.4 L563.1 292.9 L563.5 293.2 L563.6 294.7 L563.7 294.3 L563.7 292.6 L564.3 292 L564.5 291.9 L564.5 293.8 L564.5 293.9 L564.6 291.9 L565.1 291.5 L565.1 291.5 L565.2 291.4 L565.6 290.5 L565.6 284.2 L565.6 290.5 L565.7 290.8 L565.7 290.8 L566 290.4 L566.5 290.9 L566.5 290.6 L566.8 290.9 L567 291.1 L567 291.3 L567.5 291.7 L567.5 292.4 L568.2 293.2 L568.2 294.5 L568.2 294.8 L568.3 293.8 L568.4 294 L569.1 296 L569.1 302 L569.3 303.1 L569.3 295.4 L569.8 296.7 L569.8 296.8 L570.1 297.8 L570.5 297.3 L570.5 298.6 L571.2 297.7 L571.2 297.4 L571.3 297.4 L571.3 296 L572 295.2 L572 295.5 L572.1 295.4 L572.5 297.2 L572.5 296.9 L573 299.3 L573 306.9 L573.1 306 L573.1 300 L573.5 301.9 L573.7 302.4 L573.7 306 L573.9 306.5 L573.9 302.9 L574.4 304.3 L574.4 307.9 L574.6 307.9 L574.6 304.7 L575.1 305.9 L575.1 310.6 L575.2 310 L575.2 306.6 L575.8 307.1 L575.9 309.5 L576 309.8 L576 306.8 L576.1 306.8 L576.1 374.7 L576.1 306.8 L576.7 307.3 L576.7 313.2 L576.8 312.5 L576.8 307.5 L577.1 307.7 L577.5 309.8 L577.6 314.3 L577.7 314.1 L577.7 310.6 L578.4 313.8 L578.4 315.6 L578.5 316.2 L579 317.7 L579 318.2 L579.1 318.6 L579.1 317 L579.9 319.4 L579.9 318.6 L580.1 319.2 L580.7 321.3 L580.7 321.4 L581.3 323.3 L581.3 323.4 L581.8 325.3 L581.9 325.7 L582 328.6 L582.1 328.5 L582.1 326.1 L582.5 327.2 L582.5 327.2 L583 328.7 L583 331.7 L583 331.5 L583 330.7 L583.5 332 L583.6 332.6 L583.6 331.9 L584.4 336.6 L584.4 336 L584.8 339 L584.8 344.4 L584.9 345.3 L585 340 L585.1 340.9 L585.7 343.8 L585.7 343.4 L586.3 346.4 L586.3 346.7 L586.8 349.1 L587.1 350.2 L587.1 353.8 L587.2 354.5 L587.3 350.5 L587.6 351.9 L588.1 352.6 L588.1 353.9 L588.5 354.5 L588.6 354 L588.6 353.2 L589.2 351.2 L589.2 352.4 L589.2 350.1 L589.3 360 L589.3 350.1 L589.9 349.7 L589.9 348.4 L590.2 347.3 L590.4 346.8 L590.4 346.8 L591.2 344.8 L591.2 346.6 L591.3 346.4 L591.3 344 L591.8 342.7 L592 342.8 L592 345.1 L592.1 345.2 L592.1 343.1 L592.8 343.9 L592.9 346 L592.9 345.8 L592.9 344 L593.5 344.5 L593.8 344 L593.8 344.8 L594.4 343.4 L594.4 343.8 L595.2 342.1 L595.3 342.9 L595.3 342.7 L595.3 340.9 L595.5 340.5 L595.7 340.7 L595.7 340.4 L596.4 341.2 L596.4 349.1 L596.5 349.4 L596.5 446 L27.4 446 Z" fill="url(#g)" stroke="none"/>
<path d="M27.4 271.7 L28.8 258.2 L29.3 270 L29.8 268 L30.1 268 L30.1 279.2 L30.2 268 L30.4 268 L31.2 266 L31.8 265 L32 260.5 L32.4 258 L32.6 241.6 L33 233 L33.5 220 L33.5 207.5 L33.6 201.1 L33.7 194.6 L34.1 182.5 L34.2 180.8 L34.2 182.9 L34.3 177.7 L34.4 175.3 L34.7 166.4 L34.8 160.6 L34.8 161.5 L35.1 146.1 L35.2 145.8 L35.2 144.8 L35.9 143.3 L36 149.1 L36 148 L36 143.5 L36.5 142.5 L36.5 148.5 L36.5 148.3 L36.6 142.3 L37.2 138 L37.2 138.3 L38 133.3 L38 135.7 L38.1 135.1 L38.1 132.4 L38.1 132.3 L38.7 123.7 L38.7 123.6 L39.1 118.7 L39.2 119 L39.2 122 L39.3 122.7 L39.3 120.1 L39.7 121.8 L39.7 121.3 L40 122.3 L40.2 120.2 L40.3 177.3 L40.3 120.2 L40.3 120.5 L40.3 120.2 L40.7 117.7 L40.7 118.1 L41.1 116 L41.2 115.2 L41.2 115.4 L41.9 107.9 L41.9 108 L42.1 106.1 L42.5 104.9 L42.5 104.3 L43.1 102.3 L43.1 103.1 L43.7 101.3 L43.7 101 L43.8 104 L43.9 102.3 L43.9 98.2 L44.5 92.1 L44.5 91.8 L44.5 91.4 L45.3 88.1 L45.4 93.5 L45.4 92.1 L45.4 88.1 L45.8 86.7 L46 84.6 L46 84.8 L46.6 79.8 L46.8 78.6 L46.8 79.4 L47.1 75.9 L47.1 62.1 L47.1 75.9 L47.2 76.6 L47.2 75.5 L47.4 74.3 L47.8 72.5 L48 72.2 L48 77.3 L48.1 76.2 L48.1 71.9 L48.6 71.1 L48.6 72.5 L48.8 72.2 L48.8 70.8 L49.2 70.2 L49.2 70.2 L49.2 70.6 L49.2 70.2 L49.3 58.1 L49.3 70.2 L50 72.6 L50.1 73.7 L50.1 84.6 L50.2 83.8 L50.2 74.5 L50.7 76.3 L50.7 76.2 L51.2 78.1 L51.2 78.1 L51.2 78.2 L51.6 82.2 L51.6 83.4 L52.2 88.5 L52.5 88.8 L52.5 90.8 L52.7 91 L52.7 88.1 L53.2 88.7 L53.2 89.7 L54.1 90.5 L54.1 89.5 L54.2 89.7 L54.6 88.9 L54.6 92.5 L54.6 92.2 L54.7 89.5 L55.2 88.3 L55.3 91 L55.3 90.3 L55.3 87.3 L55.6 86.6 L55.9 90.5 L55.9 90.1 L56.2 93.3 L56.6 92.9 L56.7 96.8 L56.8 96 L56.8 93 L57.2 92.6 L57.4 94.8 L57.4 94.6 L58 100.9 L58 101.4 L58.2 103.1 L58.8 107.3 L58.8 111.1 L58.9 111.8 L58.9 107.4 L59.2 109.6 L59.7 113 L59.7 113.2 L60.2 116.9 L60.4 118.1 L60.4 122.1 L60.5 123.2 L60.5 120 L61.2 123.7 L61.2 126.3 L61.3 126.5 L61.3 123 L62 124.8 L62 125.8 L62.3 126.6 L62.9 122.1 L62.9 121.2 L63.3 117.7 L63.7 116.9 L63.7 124.8 L63.8 124.8 L63.8 116.5 L64 116.2 L64.2 116 L64.3 101.4 L64.3 116 L64.3 116.2 L64.3 124.8 L64.5 123.3 L64.5 116.1 L64.7 116.1 L65.2 117.3 L65.2 118 L65.3 118.4 L65.8 117.3 L65.8 117.1 L66.3 116.1 L66.4 115.1 L66.4 114.9 L67.2 109.6 L67.2 110.3 L67.7 106.6 L68.1 107.5 L68.1 107.4 L68.6 108.7 L68.6 107.7 L69.1 108.9 L69.1 111.3 L69.2 111.9 L69.2 110.2 L69.3 110.3 L69.7 115 L69.7 116.6 L69.9 118.4 L69.9 116.8 L70.3 120.9 L70.8 124 L70.8 123.7 L71.3 126.6 L71.6 126.9 L71.6 126.9 L72 127.1 L72.2 127.5 L72.2 127.8 L72.2 127.5 L72.3 114.4 L72.3 127.5 L72.6 128.5 L72.6 128.6 L72.6 131.3 L72.7 132.3 L72.7 129.3 L72.7 129.6 L73.2 133.3 L73.2 136.4 L73.3 136.9 L73.3 134.9 L73.3 135.1 L73.5 141.1 L73.9 150.1 L74.1 150.3 L74.1 149.7 L74.7 150.1 L74.7 150 L75.2 150.4 L75.3 153.1 L75.3 153.1 L75.3 151.4 L75.8 162.6 L75.8 163.8 L75.9 165.9 L75.9 165.1 L75.9 165.3 L76.8 166.1 L76.8 166.1 L76.9 166.2 L77.3 179.5 L77.3 183.7 L77.4 184 L77.4 180.8 L77.7 180.7 L77.7 243.7 L77.8 180.7 L78 181.3 L78 181 L78.4 181.3 L78.9 185.1 L78.9 185.4 L79.4 188.7 L79.8 191.6 L79.8 192.2 L80.4 196.3 L80.6 197.2 L80.6 196.9 L81.4 202 L81.4 204.8 L81.5 205 L81.5 202 L81.9 204.2 L81.9 204.2 L82.4 206.5 L82.5 207.2 L82.5 207.5 L83.3 215.1 L83.3 219.9 L83.4 219.5 L83.4 216.2 L84 219 L84 226.5 L84.1 225.3 L84.1 219.4 L84.7 222.2 L84.7 223.8 L84.9 224.6 L84.9 223.3 L85.6 230 L85.6 231.4 L86 235.6 L86 235.7 L86 236.1 L86.2 237.4 L86.2 236.3 L87 242.5 L87 243.9 L87 244.6 L87.1 243.2 L87.8 253.4 L87.8 253.5 L87.8 254.4 L88.5 257.7 L88.5 256.3 L88.8 258 L89.3 257.2 L89.3 258.4 L90 257.2 L90 257.1 L90 259.1 L90.1 258.4 L90.1 255.3 L90.4 254 L90.4 244 L90.5 254 L90.4 254 L90.4 275.3 L90.5 254 L90.6 253.2 L90.6 255.8 L90.7 254.9 L90.7 252.4 L90.8 252.1 L91.4 250.9 L91.4 250.8 L91.8 250 L91.9 254.1 L91.9 255.5 L92.4 269.4 L92.4 269.6 L92.4 268.8 L93 270.6 L93 270.1 L93.7 272.3 L93.8 279.4 L93.9 278.7 L93.9 273.6 L94 273.9 L94.5 278.6 L94.6 283.1 L94.6 283.7 L94.7 279.2 L94.8 280.4 L95.1 281.7 L95.1 281.4 L96 285 L96 285.2 L96 285.2 L96.9 289.3 L96.9 294.5 L96.9 294.7 L97 290.5 L97.4 292.7 L97.5 297.1 L97.5 297.9 L97.6 292.6 L98.3 295.1 L98.3 294.6 L98.7 296 L98.7 296.1 L98.9 296.6 L99.3 300.4 L99.3 305.8 L99.3 306.2 L99.3 301.1 L99.5 302.7 L100.2 303.2 L100.2 303.3 L100.9 303.8 L101 304.8 L101 370 L101 304.8 L101.1 306.3 L101.5 315.3 L101.5 370.5 L101.5 315.3 L101.7 320.3 L102.2 324.3 L102.2 329.4 L102.4 329.8 L102.4 325.1 L102.5 326 L103.5 334 L103.8 333.8 L103.9 339.2 L103.9 339.6 L103.9 334.2 L105.2 333.4 L105.2 340.3 L105.3 340.5 L105.3 334.9 L107.2 339.5 L107.4 340.9 L107.4 355.4 L107.6 353.7 L107.6 341.6 L108.2 345.3 L109.2 357.3 L109.6 357.5 L109.6 365.4 L109.7 365.6 L109.7 356.8 L111.2 357.5 L111.9 364.7 L111.9 373.1 L112 373 L112 367.2 L112.2 368.8 L113.6 373.7 L113.6 388.8 L113.6 386.6 L113.7 372.7 L114.2 374.6 L114.7 385.2 L114.7 390.5 L114.8 393.5 L114.9 389.6 L115 392.6 L116.2 385.6 L116.3 386.9 L116.3 394.1 L116.4 394.4 L116.4 387.8 L118 408.6 L118.1 408.1 L118.1 419.2 L118.2 417.4 L118.2 407.2 L118.2 406.4 L118.3 412 L118.3 406.4 L119.5 400.4 L120.2 395.9 L120.2 407.2 L120.3 407.2 L120.4 394.5 L121 390.2 L121.9 393.8 L121.9 394.2 L122.5 396.6 L123.5 394 L123.5 396.6 L123.7 396.2 L123.7 393.9 L124 393 L124.2 390.4 L124.3 414 L124.3 390.4 L125.4 385.4 L125.5 397.2 L125.6 393.8 L125.6 385 L126.3 378.3 L127 379.8 L127.4 374.2 L127.4 378.7 L127.5 377.9 L127.5 371.9 L128.3 360.7 L129 366.3 L129.1 365.3 L129.2 375.5 L129.2 373.8 L129.2 364.8 L130.3 356.9 L131.2 353.5 L131.2 368.9 L131.3 366.5 L131.3 353 L131.5 352.2 L132.6 351.2 L132.7 342.3 L132.8 351.2 L133.3 351 L133.3 370.3 L133.4 368.4 L133.4 351.3 L133.9 350.9 L134.8 349.6 L134.9 368.6 L134.9 365.7 L135 349.9 L135.3 349.4 L136.3 359.4 L136.6 361.6 L136.7 417 L136.8 361.6 L137 365 L137.1 364.8 L137.1 386.2 L137.2 385.8 L137.2 365.4 L138.4 363.1 L138.9 367.6 L138.9 368.1 L139.4 372.7 L139.9 378.5 L139.9 401.4 L139.9 397.3 L139.9 380.2 L140 381.2 L141 391.2 L141.3 394.5 L141.4 416.5 L141.5 415.8 L141.5 396.2 L142 400.8 L142.7 402.6 L142.7 424.9 L142.8 423 L142.8 400.1 L143.5 402 L144.1 401.2 L144.1 414.2 L144.3 414.4 L144.3 401.9 L145 400.9 L145.4 399.5 L145.5 422 L145.6 399.5 L145.7 400.3 L145.7 420.7 L145.8 422.3 L145.8 400.5 L146.9 399.4 L147 428.5 L147 422.7 L147 399 L147 398.9 L147.4 397.8 L147.5 420 L147.6 397.8 L148 398.5 L148 428 L148.1 424.3 L148.1 398.1 L149 397.6 L150.2 395.2 L150.2 401.2 L150.4 400.7 L150.4 394.5 L150.5 394.2 L152 391.2 L152.2 391.8 L152.3 452 L152.4 391.8 L152.3 392.2 L152.4 420 L152.5 418.1 L152.6 393.3 L153.5 395.8 L153.8 395.5 L153.8 397 L154.9 395.5 L154.9 421.2 L155.1 418.9 L155.1 395 L156 406.1 L156.4 411.2 L156.4 432.4 L156.5 433.5 L156.5 412 L157 418.4 L158 422.5 L158.1 426.8 L158.1 426.7 L158.1 423.2 L159 426.7 L160.3 433.8 L160.3 452 L160.5 452 L160.5 434.6 L161 437.4 L162.2 441.8 L162.3 452 L162.3 452 L162.3 442.2 L163 444.5 L163.5 440.7 L163.6 452 L163.7 452 L163.7 441.8 L165 432.6 L165.6 429.4 L165.7 452 L165.8 450.8 L165.8 425.9 L166.9 420 L167 452 L167.1 420 L167 420.1 L167.1 420.4 L167.1 421.7 L168.5 425.4 L168.8 424.6 L168.8 424.1 L170 420.8 L170.3 419.2 L170.3 419.9 L171 415.5 L171.3 413.7 L171.3 422.9 L171.5 419.7 L171.5 413.8 L172 411 L173 399 L173.4 395.2 L173.4 407.3 L173.4 404 L173.4 392.4 L174 386.8 L175 385.8 L175 400.1 L175 399.4 L175.1 385.4 L176 384.4 L176.8 393 L176.8 392.7 L177.5 400.1 L178.5 412.1 L178.6 413 L178.6 428 L178.7 426.2 L178.7 416.4 L179.5 426.1 L180.6 428.8 L180.6 452 L180.8 452 L180.8 428.7 L181.5 430.4 L182.8 430.4 L182.8 437.3 L182.9 437.9 L182.9 429.9 L183.4 429 L183.5 452 L183.6 429 L183.5 429.9 L183.9 432.5 L184 445 L184.1 443.9 L184.1 436 L184.4 435 L184.5 452 L184.6 435 L185 441.1 L185.7 443.8 L185.7 452 L185.8 452 L185.8 441.4 L186.5 444.2 L187.5 443.7 L187.5 452 L187.7 452 L187.7 443.9 L188.5 443.5 L189.4 441.1 L189.4 449.4 L189.5 447.7 L189.5 442.9 L189.6 442.6 L189.9 439 L190 414 L190.1 439 L190.4 440.6 L190.7 440.9 L190.7 449.5 L190.9 448.5 L190.9 440 L192.3 441.3 L192.3 451 L192.4 449.7 L192.4 440.6 L192.5 440.7 L193.8 427.8 L193.8 452 L193.9 452 L193.9 426.5 L194 425.3 L195 412.3 L195.8 408.6 L195.8 421.9 L195.9 422 L195.9 407.9 L196.3 406.1 L197.5 400.3 L197.5 413.7 L197.5 413.7 L197.6 402.6 L198.6 401.3 L198.6 412.1 L198.6 409.7 L198.6 398.8 L199 398.3 L200.2 396.3 L200.3 396.6 L200.3 409.9 L200.4 410.7 L200.4 398.5 L200.5 397 L200.6 376 L200.7 397 L201 400 L202 402 L202.4 402 L202.4 413.6 L202.5 411.9 L202.5 402.2 L203.8 402.2 L203.9 434.2 L203.9 430.1 L203.9 400 L204 400 L205.5 407.4 L205.5 433.2 L205.7 430.2 L205.7 408.6 L206 410.2 L207.6 419.8 L207.6 431.9 L207.7 431.8 L207.7 421.2 L208 423.1 L208.4 423 L208.5 452 L208.6 423 L209.7 426.5 L209.7 436.2 L209.9 435.8 L209.9 425.9 L210 426.1 L210.4 431 L210.5 452 L210.6 431 L211 436.1 L211 436.3 L211 452 L211.2 452 L211.2 438.5 L212 446.2 L212.4 448.7 L212.4 448 L213 452 L213.8 452 L213.8 452 L214.7 452 L214.7 452 L216.3 452 L216.3 452 L217.4 452 L217.4 452 L218.3 452 L218.3 452 L219.3 452 L219.3 452 L219.5 452 L220.5 440.2 L221 428.2 L221.2 427.6 L221.2 447.6 L221.4 446.7 L221.4 428 L221.9 425.3 L222 452 L222.1 425.3 L222.5 425 L223.1 422.4 L223.1 426 L223.2 425 L223.2 420.9 L224 417 L224.1 415.1 L224.2 419.7 L224.2 418.3 L224.2 415.4 L224.4 410.5 L224.5 452 L224.6 410.5 L225 405.3 L225.9 401.6 L225.9 414.2 L226 415 L226.1 400.8 L226.5 399 L227.9 393.4 L227.9 405 L228.1 403.6 L228.1 391.7 L229.3 387 L229.3 409.1 L229.4 405.8 L229.5 387.6 L229.5 387.4 L230.2 385.4 L230.5 383 L230.6 371 L230.7 383 L231 383.4 L231.1 383.1 L231.1 401.9 L231.1 400.8 L231.1 384.5 L232 381 L232.3 382.2 L232.3 404.6 L232.4 402.8 L232.5 382.4 L233.3 386.3 L233.7 386.9 L233.7 409.9 L233.9 408.8 L233.9 387.3 L234.6 388.4 L234.9 387.7 L235 425 L235.1 387.7 L235.9 393.9 L235.9 416.9 L236 414.7 L236 392.3 L237 398.2 L237.2 398.5 L237.2 398.3 L238.3 399.7 L238.3 399.7 L238.5 400 L239.6 396 L239.6 396.4 L239.7 421.8 L239.8 423.6 L239.8 398.4 L240.3 404.2 L241 410.2 L241.6 409.3 L241.7 434.5 L241.8 436 L241.8 412.1 L242.5 411.2 L242.8 410.3 L242.8 407.2 L242.9 406.6 L243 452 L243.1 406.6 L243.6 405.1 L243.9 408.5 L243.9 433.8 L244 435.7 L244.1 411.5 L244.3 414.7 L245 420.7 L246 414.7 L246 414.6 L246 436.3 L246.1 433.6 L246.1 414.7 L247 410.3 L247.4 412.1 L247.4 433.2 L247.4 411.5 L247.5 452 L247.6 411.5 L247.5 434.8 L247.6 412.4 L248 414.5 L249 421.5 L249.3 422.8 L249.3 444.6 L249.3 443.8 L249.3 422.6 L250 426.1 L250.3 424.8 L250.4 447.1 L250.5 445.7 L250.5 424.8 L251.5 420.9 L251.8 418.9 L251.8 440.4 L251.8 438 L251.9 419.9 L252.4 413.3 L252.5 445 L252.6 413.3 L252.7 414.3 L252.9 417.9 L252.9 417.6 L253.3 426 L254 436 L254.6 436.2 L254.6 452 L254.7 452 L254.7 434.6 L256 435.3 L256.4 436.7 L256.4 452 L256.4 436.8 L256.5 452 L256.6 436.8 L256.6 452 L256.6 438.4 L258 443.4 L258 452 L258 452 L258 443.8 L259.3 444.5 L259.3 452 L259.4 452 L259.4 445 L260 445.3 L261 446.7 L261 452 L261.1 452 L261.2 445.4 L262 446.6 L262.8 451.3 L262.8 451 L263 452 L264 452 L264 452 L265.8 452 L265.8 452 L266.5 452 L267.8 443.4 L267.8 442.4 L268 440.8 L269.5 436.8 L269.6 436.7 L269.7 450 L269.7 451.1 L269.7 436.1 L270.1 435.1 L270.2 452 L270.2 435.1 L270.3 434.8 L270.4 423 L270.4 434.8 L271 434.4 L271.9 438.2 L271.9 448.5 L272.1 448.2 L272.1 438.4 L273.3 439.5 L273.3 450.5 L273.4 449.9 L273.5 440.6 L274 441.2 L274.6 443.7 L274.7 452 L274.8 452 L274.8 445 L275.5 447.7 L276.3 452 L276.3 452 L276.5 452 L277.5 452 L277.5 452 L278.1 452 L278.4 452 L278.5 425 L278.6 452 L278.9 452 L279.3 452 L279.3 452 L280.8 452 L280.8 452 L281.5 452 L282.2 445.6 L282.2 452 L282.3 452 L282.3 445 L282.5 442.3 L283 431.3 L283.7 438.3 L283.8 439.1 L283.8 436.8 L283.9 437.5 L284 452 L284.1 437.5 L284.5 440 L285.2 426.5 L285.2 426.7 L285.5 420.2 L285.9 413 L286 430 L286.1 413 L286.2 410.2 L286.2 430.9 L286.3 428 L286.3 409.2 L286.5 406.4 L287 390.4 L288.2 393.4 L288.3 393.5 L288.3 416.1 L288.4 414.5 L288.4 393.8 L289.5 394.6 L290.5 392.6 L290.6 392.4 L290.6 414.9 L290.6 417 L290.6 391.8 L291.5 390.1 L292 388.1 L292 408.7 L292.1 408.2 L292.2 387.5 L293 384.1 L293.8 383.5 L293.8 404.1 L294 405.9 L294 383.4 L294.2 383.3 L294.6 383 L294.6 377 L294.7 383 L295 383.3 L296.2 384 L296.2 384.4 L296.6 384.6 L297.2 386.9 L297.2 407 L297.3 404.4 L297.4 389.7 L298.6 394.6 L299.1 396.7 L299.1 414.8 L299.3 415.4 L299.3 396.3 L300.6 401.5 L301.2 399 L301.2 418.3 L301.4 419.7 L301.4 398.4 L301.6 396 L301.6 452 L301.7 396 L301.6 397.6 L302.6 391.6 L303.2 387 L303.2 405.9 L303.3 403.6 L303.3 385.4 L303.6 383 L304.6 379.9 L304.6 375 L304.7 379.9 L305 380 L305 379.2 L306 377.2 L307 378.5 L307 378.8 L307.6 379.5 L308.7 384.5 L309 385.5 L309 389.1 L309.1 389.2 L309.1 385.8 L309.7 388.1 L310.1 387.2 L310.2 401.3 L310.3 398.8 L310.3 388.6 L311.7 385.9 L312.4 384.4 L312.4 396.7 L312.6 397 L312.6 383.6 L313.7 381.1 L313.8 392 L313.8 390.2 L313.8 379.5 L314 379.1 L314.9 378.7 L314.9 401.1 L315 400.6 L315 378.7 L316 378.2 L316.8 377.8 L316.9 395.3 L316.9 393.9 L317 377.7 L318 377.2 L319.1 377.2 L319.1 396.6 L319.3 393.2 L319.3 377.4 L319.7 377.4 L320.8 380 L320.8 384.8 L321 384.7 L321 381.6 L322.5 382.8 L322.6 389.1 L322.7 388.4 L322.7 382.1 L323.7 382.8 L324.7 387.4 L324.7 421.1 L324.9 418.4 L324.9 388.2 L325 388.7 L326 392.7 L326.2 392.6 L326.2 426.4 L326.2 426.9 L326.3 391.9 L327.5 391.1 L328.3 390 L328.3 405 L328.4 404.8 L328.5 391.9 L329 391.2 L330 396.2 L330.4 397.8 L330.4 410.6 L330.5 410.9 L330.6 396.8 L330.9 398 L331 452 L331.1 398 L331 398.6 L332.3 399.1 L332.4 413.6 L332.4 411.4 L332.4 401.4 L333.4 401.7 L333.4 422.5 L333.5 419.7 L333.5 399.5 L333.7 399.5 L334.8 405.4 L334.8 428.5 L335 425.2 L334.9 406 L335 452 L335.1 406 L335 406 L336 400 L336.6 396.2 L336.7 429.3 L336.7 429.1 L336.7 398.4 L337 396.6 L338.4 395.9 L338.4 426.4 L338.5 420.5 L338.5 395.5 L339 395.2 L340 384.2 L340 384.1 L340 392.2 L340.1 390.1 L340.1 381.9 L341 376.6 L341.6 372.8 L341.6 382.6 L341.8 380.5 L341.8 371.4 L342 370.4 L343.7 360.9 L343.7 384.7 L343.8 386.2 L343.8 362.9 L345 366.8 L345.1 366.8 L345.1 374.2 L345.2 373.3 L345.2 367.4 L346 368.2 L346.9 363.9 L346.9 394.5 L347 388.9 L347 360.5 L347 360.4 L348 356.4 L349.1 355.4 L349.2 388.8 L349.3 389.8 L349.3 355.6 L349.6 355.3 L350.1 356.9 L350.2 436 L350.2 356.9 L350.8 359.9 L350.8 378.9 L350.9 380 L351 360.4 L351 360.5 L351.9 364 L351.9 383.4 L352 382 L352 364.6 L352 364.7 L353 369.7 L353.4 371.2 L353.4 390.3 L353.5 388.3 L353.5 373.7 L354 375.8 L354.6 378.1 L354.6 386 L354.7 386.9 L354.7 378.2 L355 379.5 L356.6 384.4 L356.6 405.9 L356.7 406.7 L356.7 382.7 L357 383.6 L358.2 383 L358.3 452 L358.4 383 L358.8 383.6 L358.8 394.9 L358.9 392.6 L359 384.2 L359 384.2 L360 395.2 L360.4 396.1 L360.4 410.5 L360.5 410.4 L360.6 396 L361.5 398.4 L362.1 399.4 L362.1 420.3 L362.2 418.5 L362.2 400.1 L362.7 400.8 L364 397.8 L364.1 397.4 L364.1 397.8 L365 395.3 L365.7 393.9 L365.7 399.6 L365.8 399.1 L365.8 392.5 L366.5 391.1 L366.7 390.7 L366.7 391.1 L368 388.6 L368.3 388.7 L368.3 414.1 L368.3 409.2 L368.4 388.2 L369.5 388.8 L369.5 420.7 L369.6 422.4 L369.6 391 L370 391.2 L371 390.2 L371.3 388 L371.4 375 L371.4 388 L371.7 390.2 L371.7 388.1 L371.8 388.1 L372.4 388.1 L373.5 387 L373.5 420 L373.6 421.8 L373.6 387.5 L374.4 386.7 L375 387.8 L375 420.3 L375.2 414.6 L375.2 387.6 L376 389.1 L376.8 389.7 L376.8 418.3 L376.9 413.8 L376.9 392.2 L377.4 392.5 L378.5 389.5 L378.8 388.7 L378.8 397.3 L378.9 396 L378.9 386.3 L379.4 384.6 L380.3 382.3 L380.3 393 L380.5 393.3 L380.5 384.2 L380.6 383.9 L381.8 380.9 L382 383 L382 391.3 L382.1 391.6 L382.1 383.1 L382.6 388.3 L383.4 396.3 L383.5 396.4 L383.5 394.1 L384.3 395 L384.4 452 L384.4 395 L385.5 396 L385.6 395.3 L385.6 406.4 L385.6 404 L385.7 394.5 L386.5 384.5 L386.7 383.8 L386.7 399.9 L386.8 397 L386.8 383 L387.4 381 L387.5 410 L387.6 381 L388.3 378.7 L388.3 401.9 L388.4 399.1 L388.4 378.7 L388.5 378.4 L389.9 377.2 L390 428 L390.1 377.2 L390.5 377.5 L390.5 400.3 L390.6 395.3 L390.7 375.3 L391.5 364.3 L392.2 361.6 L392.2 388.1 L392.4 382.8 L392.4 360.6 L392.5 360.2 L393 358.3 L393 358.2 L393.5 356 L393.5 356 L393.5 355.9 L394.1 354.4 L394.1 354.6 L394.4 353.5 L394.5 383 L394.6 353.5 L394.9 352.9 L394.9 352.8 L395.4 351.5 L395.4 378.1 L395.5 374 L395.6 351.1 L396 350.4 L396 350.6 L396.6 349.8 L396.6 349.7 L397.5 348.4 L397.5 374.9 L397.6 375.4 L397.6 349 L398 349.8 L398 349 L398.5 350 L398.9 350.9 L398.9 351.6 L399.5 352.7 L399.6 353.1 L399.6 379.2 L399.7 375.5 L399.7 352.8 L400.3 355 L400.3 355.2 L401 357.5 L401 358.1 L401.5 359.8 L401.9 360.8 L401.9 360.2 L402.5 361.7 L402.5 362.3 L403.4 364 L403.5 390 L403.6 364 L403.5 364.8 L403.5 364.7 L403.5 364 L404.2 362.7 L404.2 366.5 L404.4 366.6 L404.4 364.4 L404.8 363.6 L404.8 365.5 L404.9 365 L404.9 361.7 L405.5 360.7 L405.5 367.3 L405.6 366.7 L405.6 360.3 L406.2 363.7 L406.2 374.3 L406.3 374.5 L406.4 364.6 L406.6 366.1 L407 368.8 L407 369.8 L407.6 374.1 L407.8 373.3 L407.8 382.9 L407.8 381.8 L407.9 373.7 L408.5 371.2 L408.5 370.3 L408.6 369.9 L409.2 367.4 L409.2 366.6 L409.6 365.1 L410 364.3 L410 365.9 L410.6 364.6 L410.6 367.6 L410.7 367.1 L410.7 363 L411 362.4 L411.1 362.2 L411.1 363.4 L412.1 362.2 L412.1 360.7 L412.6 360.1 L413 358.8 L413 363.4 L413.1 363 L413.1 358.9 L414.1 356 L414.1 356.4 L414.6 354.8 L414.7 354.5 L414.8 358.4 L414.8 358.1 L414.8 353.9 L415.8 351.5 L415.8 351.1 L416.5 349.3 L416.5 355.9 L416.6 355.9 L416.6 349.4 L416.6 349.4 L417.4 346 L417.4 346.3 L418 344.1 L418 343.9 L418.6 341.4 L418.9 339.9 L418.9 339.7 L419.3 337.6 L419.3 338.5 L419.6 337.1 L420.3 333.9 L420.3 339.4 L420.4 338.4 L420.4 332.9 L420.7 331.6 L421 331.7 L421 339.1 L421.1 337.7 L421.1 332.2 L421.6 331.5 L421.7 394.5 L421.8 331.5 L421.7 332.5 L421.8 343.1 L421.8 343.2 L421.9 331.9 L421.9 331.6 L422 395 L422.1 331.6 L422.3 332.2 L422.4 343.5 L422.4 344.1 L422.4 332.7 L422.7 332.8 L423.4 334.4 L423.4 334.5 L423.5 334.9 L424.1 341.2 L424.2 344.3 L424.3 345.8 L424.3 342.7 L424.4 344 L425 345.1 L425 344.6 L425.5 345.5 L425.6 345.7 L425.7 414 L425.8 345.7 L425.8 346.4 L425.8 346.3 L425.9 346.7 L426 415 L426.1 346.7 L426.6 349 L426.6 349.5 L427 350.8 L427.2 351.7 L427.2 351.2 L427.9 353.8 L428 361.7 L428 362.5 L427.9 353.8 L428 421 L428.1 353.8 L428 355.9 L428.6 358.1 L428.6 357.2 L429 358.7 L429.1 358.9 L429.1 368.3 L429.2 368 L429.2 358.8 L429.8 359.9 L429.8 359.7 L430.6 361.4 L430.7 371.3 L430.8 369.5 L430.8 361.3 L431 361.8 L431.2 362.5 L431.2 362.6 L432 365.2 L432 371.4 L432.2 372 L432.2 365.7 L432.6 367 L432.6 369.5 L432.7 370.1 L432.7 368.3 L433 369.1 L433.6 371.4 L433.6 374.9 L433.7 374.5 L433.7 371 L434.3 373.5 L434.3 373.4 L434.5 374 L435 376.2 L435.1 380.7 L435.2 381.6 L435.2 376.8 L435.7 379 L435.8 384.8 L435.9 385.9 L435.9 379.8 L436 380.1 L436.5 380.7 L436.5 381.4 L437 381.9 L437 389.9 L437.1 390 L437.2 381.4 L437.7 382 L437.9 380.7 L437.9 381.5 L438.4 378.3 L438.4 378.8 L438.4 377.1 L438.5 452 L438.6 377.1 L438.5 378.2 L438.5 377 L439 374.1 L439.1 373.1 L439.1 373.8 L439.9 362.2 L439.9 368 L440 367.3 L440 360.2 L440.7 328.5 L440.8 328.6 L440.8 328.7 L440.9 328.3 L441 385 L441.1 328.3 L441.4 329.3 L441.4 328.8 L441.9 329.1 L442 399 L442.1 329.1 L442.1 329.4 L442.1 329.8 L442.7 330.3 L442.7 332.6 L442.8 332.5 L442.8 330.7 L443 330.9 L443.3 331 L443.3 331.3 L444.1 331.7 L444.1 331 L444.7 331.3 L444.7 330.9 L445 331.1 L445.2 332.8 L445.2 335.8 L445.3 337 L445.3 334.6 L446 342.3 L446.1 342.4 L446.1 347.3 L446.1 347.2 L446.2 344.1 L446.6 345.3 L446.6 344.3 L447.5 346.4 L447.5 346.3 L447.8 346.5 L447.8 379 L447.9 346.5 L448 347.6 L448.1 347.1 L448.1 351.6 L448.2 349.7 L448.2 347 L449 341.7 L449 341.5 L449 345 L449.1 343.3 L449.1 340.5 L449.8 331.7 L449.8 333.3 L449.9 333 L449.9 330.1 L450.5 330.5 L450.5 330.7 L451 331 L451 337.3 L451.2 336.4 L451.2 332.5 L451.5 332.7 L451.7 332.7 L451.7 332 L451.9 331 L452 321 L452.1 331 L452.1 332 L452.1 331.3 L452.5 331.3 L452.7 331.9 L452.7 336.7 L452.8 336.3 L452.8 332.4 L453 333.1 L453.2 334 L453.2 333.9 L453.7 336.4 L453.7 337.8 L453.8 336.6 L453.8 398 L453.9 336.6 L454.2 339.7 L454.2 339.2 L454.7 341.4 L454.7 342.4 L455 343.9 L455 344 L455 345.2 L455.2 346.4 L455.2 344.1 L455.6 346.4 L455.6 346.6 L456.4 351.7 L456.4 351.1 L457 354.8 L457.1 354.6 L457.1 354.7 L457.6 351.3 L457.6 426 L457.7 351.3 L457.9 350.3 L457.9 351.4 L458.6 347.8 L458.6 346.6 L459 344.4 L459.3 343.5 L459.3 343.4 L460 340.8 L460 340.8 L460.8 338.1 L460.8 341 L460.8 340.3 L460.9 337.7 L461 337.2 L461.7 335.8 L461.7 338.8 L461.7 338.7 L461.8 336.5 L462.4 335.3 L462.4 337.4 L462.4 337.3 L462.4 334.4 L462.8 333.2 L462.9 402 L462.9 333.2 L463 333.3 L463.1 333.2 L463.1 333.1 L463.6 332.8 L463.6 332.9 L464.4 332.4 L464.4 332.3 L465.2 331.8 L465.2 331.6 L465.5 331.4 L465.5 331.4 L466 331.1 L466 331 L466 331.7 L466.5 331 L466.5 333.2 L466.7 333 L466.7 332.1 L467.1 331.5 L467.1 330 L467.5 329.4 L467.5 329.8 L467.6 329.6 L467.7 329 L468 328.5 L468.5 328.2 L468.5 330.5 L468.6 330 L468.7 329.2 L469.1 328.9 L469.1 329.2 L469.5 329 L469.5 328.9 L469.5 327.4 L469.9 326.5 L470 323 L470.1 326.5 L470.1 326.9 L470.1 327.1 L470.5 326.6 L470.6 326.8 L470.6 326.2 L471 327.1 L471.1 327.4 L471.1 329.2 L471.6 331.2 L471.7 420 L471.8 331.2 L471.8 333.8 L471.8 332.1 L472 333.2 L472.2 335.4 L472.3 380 L472.4 335.4 L472.4 336.5 L472.4 338.7 L472.5 339 L472.5 336.9 L473 341 L473.3 337.4 L473.3 337.4 L473.8 332.5 L473.8 333.5 L474 331 L474.5 325.5 L474.6 326.9 L474.7 325.6 L474.7 324 L475 320.9 L475.2 320.1 L475.2 319.3 L476 316.1 L476 316.2 L476.6 313.7 L476.7 317.7 L476.8 317.3 L476.9 312.7 L477 312.1 L477.5 306.5 L477.5 306.9 L478 301.5 L478.2 300.1 L478.2 300.1 L478.8 295.1 L478.8 294.5 L479.4 289 L479.6 290 L479.6 290.1 L480.1 293.7 L480.1 294.2 L480.2 294.7 L480.8 296.8 L480.8 296.2 L481 297.1 L481.3 295.8 L481.3 296 L481.9 293.5 L482 297.9 L482.1 296.7 L482.1 293.7 L482.7 291.4 L482.7 291.7 L483 290.4 L483.5 290.8 L483.5 289.5 L484.2 290 L484.2 291.6 L484.5 291.8 L485 290.2 L485 289.4 L485.6 287.6 L485.6 286.9 L486 285.8 L486.5 293.7 L486.5 300 L486.5 300.7 L486.5 295.4 L486.6 296.4 L486.9 298.6 L486.9 304.9 L487 306.1 L487 300.5 L487.7 302.2 L487.7 301.1 L488.3 302.5 L488.4 372.5 L488.4 302.5 L488.5 303 L488.5 304.4 L489 305.7 L489.2 305.8 L489.2 309.8 L489.4 308.7 L489.4 304.3 L490 304.5 L490 306.2 L490.4 306.4 L490.5 310 L490.5 308.9 L490.5 304.9 L490.9 305.1 L490.9 305.4 L491.4 305.6 L491.4 310.3 L491.5 310.4 L491.5 304.9 L492 305 L492.3 304.7 L492.3 306 L492.7 305.6 L492.7 304.7 L493.1 304.4 L493.1 304.1 L493.6 303.6 L493.6 305 L494 304.6 L494.2 304.6 L494.2 306.1 L494.3 305.5 L494.3 303.5 L494.8 303.5 L494.8 303 L495.3 303 L495.3 303 L495.8 303 L495.8 303.3 L496 303.3 L496.2 303.2 L496.2 307.4 L496.3 307.2 L496.3 303.1 L497 302.8 L497 302.6 L497.8 302.2 L497.8 302.4 L498 302.2 L498.4 302 L498.4 302.1 L498.9 301.9 L498.9 306.1 L498.9 305.6 L499 302.2 L499.7 301.8 L499.7 302.5 L500 302.4 L500.3 302.5 L500.3 302.4 L501 302.6 L501 301.4 L501.9 301.6 L501.9 302 L502.5 302.2 L502.5 302.4 L502.5 302.2 L503.4 306.4 L503.4 307.3 L503.7 309.1 L503.8 309.2 L503.8 308.6 L504.2 308.8 L504.2 308.7 L504.6 308.4 L504.6 365 L504.7 308.4 L504.7 309 L504.7 310.5 L505.4 310.8 L505.4 309.3 L505.4 308.9 L505.5 376.5 L505.6 308.9 L505.8 309 L505.8 376.4 L505.9 309 L505.8 309.5 L505.9 309.3 L505.9 309.2 L506.7 307.9 L506.7 311.7 L506.8 311.4 L506.8 309.3 L507.3 308.5 L507.3 308.5 L507.5 308.1 L507.7 310.2 L507.7 308.4 L508.1 313.1 L508.1 313.4 L508.3 315.6 L508.8 318.4 L508.8 318.6 L509.5 323 L509.5 322.3 L509.7 323.5 L510 325 L510 329.2 L510.1 329.4 L510.1 325.9 L510.8 329.1 L510.8 332.9 L510.9 334 L510.9 330.8 L511.3 332.6 L511.3 331.4 L511.3 331.8 L511.4 343.5 L511.4 331.8 L511.4 331.9 L511.7 332 L511.7 333 L512.1 333.1 L512.1 333.2 L512.7 333.4 L512.7 332.9 L513.2 333.1 L513.2 333.3 L513.4 333.3 L514 332.6 L514 332.2 L514.8 331.1 L514.8 330.7 L515.6 329.6 L515.6 330.5 L515.9 330.1 L516.3 334.9 L516.3 334.3 L516.7 338.6 L516.8 338.8 L516.8 340.9 L516.9 340.8 L516.9 339 L517.7 340.7 L517.8 342.8 L517.9 342.8 L518 341.5 L518.3 342.2 L518.3 342.3 L518.4 342.5 L518.9 343.5 L518.9 343.7 L519.5 344.9 L519.5 346.3 L519.5 346.4 L519.6 344.3 L520.1 345.4 L520.1 347.8 L520.7 348.9 L520.7 346.5 L520.9 347 L521.1 346.9 L521.1 347.2 L521.4 346.6 L521.4 359.2 L521.4 346.6 L521.6 347 L521.6 347.2 L522.1 347.1 L522.1 348.7 L522.5 348.5 L522.5 348.6 L522.7 348.3 L522.7 347.5 L523.2 347.4 L523.2 348.4 L523.4 348.2 L523.4 346.6 L523.4 346.6 L524 346 L524 347.5 L524.5 347 L524.6 347.3 L524.7 346.9 L524.8 345.2 L525.1 344.9 L525.1 346.8 L525.2 346.8 L525.2 344.8 L525.4 344.6 L525.6 345.3 L525.6 353.6 L525.8 355 L525.8 346.2 L526.2 347.5 L526.2 347.3 L526.5 348.6 L526.5 348.3 L526.9 349.6 L526.9 349.8 L527.5 351.7 L527.7 352.4 L527.7 355.1 L527.9 355.4 L527.9 354 L528.7 356.6 L528.7 357.8 L529.1 358.9 L529.1 356.6 L529.2 356.9 L529.2 357.1 L529.3 426 L529.3 357.1 L529.6 358.4 L529.6 365 L529.7 365 L529.7 358.8 L530.3 361.2 L530.3 362.1 L530.9 364.3 L531 364.7 L531 365.7 L531.9 368.1 L531.9 367.5 L532.4 369 L532.4 367.9 L532.6 368.6 L532.9 369.2 L532.9 370.7 L533.3 371.5 L533.3 376.6 L533.4 375.9 L533.4 370.3 L533.8 371.2 L533.8 371 L534.2 371.8 L534.6 373 L534.6 373.4 L535.3 375.3 L535.3 376.7 L535.4 376.9 L535.7 376.1 L535.7 374.9 L536 373.1 L536 442.5 L536 373.1 L536.3 372.9 L536.3 373 L537 370.8 L537 370.7 L537 371.2 L537.6 369.8 L537.6 368.9 L538.3 367.4 L538.3 368.3 L538.8 367.2 L538.8 366.2 L539.2 365.3 L539.4 363.8 L539.4 370.3 L539.5 369.1 L539.5 363 L540 359 L540 377.6 L540 359 L540.2 358.4 L540.2 364.7 L540.3 363.8 L540.3 359.2 L540.4 358.3 L541 354.5 L541.1 360.2 L541.1 358.6 L541.1 351.9 L541.6 349 L541.6 349.1 L541.7 348.4 L542.2 344.8 L542.2 345.6 L542.6 342.7 L543.1 339.3 L543.1 338.7 L543.7 333.7 L543.8 332.6 L543.8 332.7 L544.3 326.9 L544.3 326.6 L544.7 322.6 L544.9 322.9 L544.9 325.2 L544.9 325.3 L545 323.3 L545.8 324.9 L545.8 324.9 L545.9 325.1 L546.2 323.9 L546.2 397.6 L546.2 323.9 L546.4 323.3 L546.4 325.5 L546.5 325.3 L546.5 323.6 L546.7 322.8 L547.1 324 L547.1 312.6 L547.1 324 L547.3 325.7 L547.3 327.2 L547.5 328 L547.5 326.2 L548.1 328.6 L548.2 328.7 L548.2 330.3 L548.6 331 L548.6 329.2 L549.2 330.3 L549.2 330.8 L549.6 331.5 L549.6 332.5 L550.1 333.3 L550.4 332.4 L550.4 339.5 L550.5 338.7 L550.5 331.2 L551.3 328.8 L551.3 329.7 L551.8 328.3 L552.1 327 L552.1 326.7 L552.5 325.1 L552.5 324 L553.2 320.9 L553.2 329.5 L553.2 327.8 L553.3 320.6 L553.4 320.1 L554 318.7 L554 318.7 L554.7 317.1 L554.7 317.1 L554.7 318.7 L555.1 316.5 L555.1 305 L555.1 316.5 L555.3 318 L555.3 316.4 L555.5 316.1 L555.9 316.1 L556 315.7 L556 316.4 L556.4 315.3 L556.4 317.8 L556.5 317.3 L556.5 314.2 L557.1 312.5 L557.1 313.1 L557.6 311.7 L557.9 310.8 L557.9 314.8 L558 314.1 L558.1 309.8 L558.8 307.3 L558.8 308.3 L559.3 306.4 L559.3 306.3 L559.3 305 L559.7 303.9 L559.7 304 L560.1 302.9 L560.1 311.5 L560.2 311.4 L560.2 302.3 L560.6 300.9 L560.6 301.2 L560.9 300.4 L561.1 299.8 L561.1 299.4 L561.7 297.1 L561.7 297.6 L562.1 295.9 L562.1 295.7 L562.6 293.7 L562.8 293.4 L562.8 293.9 L563.1 292.9 L563.1 361.4 L563.1 292.9 L563.5 293.2 L563.6 294.7 L563.7 294.3 L563.7 292.6 L564.3 292 L564.5 291.9 L564.5 293.8 L564.5 293.9 L564.6 291.9 L565.1 291.5 L565.1 291.5 L565.2 291.4 L565.6 290.5 L565.6 284.2 L565.6 290.5 L565.7 290.8 L565.7 290.8 L566 290.4 L566.5 290.9 L566.5 290.6 L566.8 290.9 L567 291.1 L567 291.3 L567.5 291.7 L567.5 292.4 L568.2 293.2 L568.2 294.5 L568.2 294.8 L568.3 293.8 L568.4 294 L569.1 296 L569.1 302 L569.3 303.1 L569.3 295.4 L569.8 296.7 L569.8 296.8 L570.1 297.8 L570.5 297.3 L570.5 298.6 L571.2 297.7 L571.2 297.4 L571.3 297.4 L571.3 296 L572 295.2 L572 295.5 L572.1 295.4 L572.5 297.2 L572.5 296.9 L573 299.3 L573 306.9 L573.1 306 L573.1 300 L573.5 301.9 L573.7 302.4 L573.7 306 L573.9 306.5 L573.9 302.9 L574.4 304.3 L574.4 307.9 L574.6 307.9 L574.6 304.7 L575.1 305.9 L575.1 310.6 L575.2 310 L575.2 306.6 L575.8 307.1 L575.9 309.5 L576 309.8 L576 306.8 L576.1 306.8 L576.1 374.7 L576.1 306.8 L576.7 307.3 L576.7 313.2 L576.8 312.5 L576.8 307.5 L577.1 307.7 L577.5 309.8 L577.6 314.3 L577.7 314.1 L577.7 310.6 L578.4 313.8 L578.4 315.6 L578.5 316.2 L579 317.7 L579 318.2 L579.1 318.6 L579.1 317 L579.9 319.4 L579.9 318.6 L580.1 319.2 L580.7 321.3 L580.7 321.4 L581.3 323.3 L581.3 323.4 L581.8 325.3 L581.9 325.7 L582 328.6 L582.1 328.5 L582.1 326.1 L582.5 327.2 L582.5 327.2 L583 328.7 L583 331.7 L583 331.5 L583 330.7 L583.5 332 L583.6 332.6 L583.6 331.9 L584.4 336.6 L584.4 336 L584.8 339 L584.8 344.4 L584.9 345.3 L585 340 L585.1 340.9 L585.7 343.8 L585.7 343.4 L586.3 346.4 L586.3 346.7 L586.8 349.1 L587.1 350.2 L587.1 353.8 L587.2 354.5 L587.3 350.5 L587.6 351.9 L588.1 352.6 L588.1 353.9 L588.5 354.5 L588.6 354 L588.6 353.2 L589.2 351.2 L589.2 352.4 L589.2 350.1 L589.3 360 L589.3 350.1 L589.9 349.7 L589.9 348.4 L590.2 347.3 L590.4 346.8 L590.4 346.8 L591.2 344.8 L591.2 346.6 L591.3 346.4 L591.3 344 L591.8 342.7 L592 342.8 L592 345.1 L592.1 345.2 L592.1 343.1 L592.8 343.9 L592.9 346 L592.9 345.8 L592.9 344 L593.5 344.5 L593.8 344 L593.8 344.8 L594.4 343.4 L594.4 343.8 L595.2 342.1 L595.3 342.9 L595.3 342.7 L595.3 340.9 L595.5 340.5 L595.7 340.7 L595.7 340.4 L596.4 341.2 L596.4 349.1 L596.5 349.4" fill="none" stroke="#F2CC0C" stroke-width="0.48" stroke-linejoin="round"/>
<path d="M27.4 271.7h0M28.8 258.2h0M29.3 270h0M29.8 268h0M30.1 268h0M30.1 279.2h0M30.2 268h0M30.4 268h0M31.2 266h0M31.8 265h0M32 260.5h0M32.4 258h0M32.6 241.6h0M33 233h0M33.5 220h0M33.5 207.5h0M33.6 201.1h0M33.7 194.6h0M34.1 182.5h0M34.2 180.8h0M34.2 182.9h0M34.3 177.7h0M34.4 175.3h0M34.7 166.4h0M34.8 160.6h0M34.8 161.5h0M35.1 146.1h0M35.2 145.8h0M35.2 144.8h0M35.9 143.3h0M36 149.1h0M36 148h0M36 143.5h0M36.5 142.5h0M36.5 148.5h0M36.5 148.3h0M36.6 142.3h0M37.2 138h0M37.2 138.3h0M38 133.3h0M38 135.7h0M38.1 135.1h0M38.1 132.4h0M38.1 132.3h0M38.7 123.7h0M38.7 123.6h0M39.1 118.7h0M39.2 119h0M39.2 122h0M39.3 122.7h0M39.3 120.1h0M39.7 121.8h0M39.7 121.3h0M40 122.3h0M40.2 120.2h0M40.3 177.3h0M40.3 120.2h0M40.3 120.5h0M40.3 120.2h0M40.7 117.7h0M40.7 118.1h0M41.1 116h0M41.2 115.2h0M41.2 115.4h0M41.9 107.9h0M41.9 108h0M42.1 106.1h0M42.5 104.9h0M42.5 104.3h0M43.1 102.3h0M43.1 103.1h0M43.7 101.3h0M43.7 101h0M43.8 104h0M43.9 102.3h0M43.9 98.2h0M44.5 92.1h0M44.5 91.8h0M44.5 91.4h0M45.3 88.1h0M45.4 93.5h0M45.4 92.1h0M45.4 88.1h0M45.8 86.7h0M46 84.6h0M46 84.8h0M46.6 79.8h0M46.8 78.6h0M46.8 79.4h0M47.1 75.9h0M47.1 62.1h0M47.1 75.9h0M47.2 76.6h0M47.2 75.5h0M47.4 74.3h0M47.8 72.5h0M48 72.2h0M48 77.3h0M48.1 76.2h0M48.1 71.9h0M48.6 71.1h0M48.6 72.5h0M48.8 72.2h0M48.8 70.8h0M49.2 70.2h0M49.2 70.2h0M49.2 70.6h0M49.2 70.2h0M49.3 58.1h0M49.3 70.2h0M50 72.6h0M50.1 73.7h0M50.1 84.6h0M50.2 83.8h0M50.2 74.5h0M50.7 76.3h0M50.7 76.2h0M51.2 78.1h0M51.2 78.1h0M51.2 78.2h0M51.6 82.2h0M51.6 83.4h0M52.2 88.5h0M52.5 88.8h0M52.5 90.8h0M52.7 91h0M52.7 88.1h0M53.2 88.7h0M53.2 89.7h0M54.1 90.5h0M54.1 89.5h0M54.2 89.7h0M54.6 88.9h0M54.6 92.5h0M54.6 92.2h0M54.7 89.5h0M55.2 88.3h0M55.3 91h0M55.3 90.3h0M55.3 87.3h0M55.6 86.6h0M55.9 90.5h0M55.9 90.1h0M56.2 93.3h0M56.6 92.9h0M56.7 96.8h0M56.8 96h0M56.8 93h0M57.2 92.6h0M57.4 94.8h0M57.4 94.6h0M58 100.9h0M58 101.4h0M58.2 103.1h0M58.8 107.3h0M58.8 111.1h0M58.9 111.8h0M58.9 107.4h0M59.2 109.6h0M59.7 113h0M59.7 113.2h0M60.2 116.9h0M60.4 118.1h0M60.4 122.1h0M60.5 123.2h0M60.5 120h0M61.2 123.7h0M61.2 126.3h0M61.3 126.5h0M61.3 123h0M62 124.8h0M62 125.8h0M62.3 126.6h0M62.9 122.1h0M62.9 121.2h0M63.3 117.7h0M63.7 116.9h0M63.7 124.8h0M63.8 124.8h0M63.8 116.5h0M64 116.2h0M64.2 116h0M64.3 101.4h0M64.3 116h0M64.3 116.2h0M64.3 124.8h0M64.5 123.3h0M64.5 116.1h0M64.7 116.1h0M65.2 117.3h0M65.2 118h0M65.3 118.4h0M65.8 117.3h0M65.8 117.1h0M66.3 116.1h0M66.4 115.1h0M66.4 114.9h0M67.2 109.6h0M67.2 110.3h0M67.7 106.6h0M68.1 107.5h0M68.1 107.4h0M68.6 108.7h0M68.6 107.7h0M69.1 108.9h0M69.1 111.3h0M69.2 111.9h0M69.2 110.2h0M69.3 110.3h0M69.7 115h0M69.7 116.6h0M69.9 118.4h0M69.9 116.8h0M70.3 120.9h0M70.8 124h0M70.8 123.7h0M71.3 126.6h0M71.6 126.9h0M71.6 126.9h0M72 127.1h0M72.2 127.5h0M72.2 127.8h0M72.2 127.5h0M72.3 114.4h0M72.3 127.5h0M72.6 128.5h0M72.6 128.6h0M72.6 131.3h0M72.7 132.3h0M72.7 129.3h0M72.7 129.6h0M73.2 133.3h0M73.2 136.4h0M73.3 136.9h0M73.3 134.9h0M73.3 135.1h0M73.5 141.1h0M73.9 150.1h0M74.1 150.3h0M74.1 149.7h0M74.7 150.1h0M74.7 150h0M75.2 150.4h0M75.3 153.1h0M75.3 153.1h0M75.3 151.4h0M75.8 162.6h0M75.8 163.8h0M75.9 165.9h0M75.9 165.1h0M75.9 165.3h0M76.8 166.1h0M76.8 166.1h0M76.9 166.2h0M77.3 179.5h0M77.3 183.7h0M77.4 184h0M77.4 180.8h0M77.7 180.7h0M77.7 243.7h0M77.8 180.7h0M78 181.3h0M78 181h0M78.4 181.3h0M78.9 185.1h0M78.9 185.4h0M79.4 188.7h0M79.8 191.6h0M79.8 192.2h0M80.4 196.3h0M80.6 197.2h0M80.6 196.9h0M81.4 202h0M81.4 204.8h0M81.5 205h0M81.5 202h0M81.9 204.2h0M81.9 204.2h0M82.4 206.5h0M82.5 207.2h0M82.5 207.5h0M83.3 215.1h0M83.3 219.9h0M83.4 219.5h0M83.4 216.2h0M84 219h0M84 226.5h0M84.1 225.3h0M84.1 219.4h0M84.7 222.2h0M84.7 223.8h0M84.9 224.6h0M84.9 223.3h0M85.6 230h0M85.6 231.4h0M86 235.6h0M86 235.7h0M86 236.1h0M86.2 237.4h0M86.2 236.3h0M87 242.5h0M87 243.9h0M87 244.6h0M87.1 243.2h0M87.8 253.4h0M87.8 253.5h0M87.8 254.4h0M88.5 257.7h0M88.5 256.3h0M88.8 258h0M89.3 257.2h0M89.3 258.4h0M90 257.2h0M90 257.1h0M90 259.1h0M90.1 258.4h0M90.1 255.3h0M90.4 254h0M90.4 244h0M90.5 254h0M90.4 254h0M90.4 275.3h0M90.5 254h0M90.6 253.2h0M90.6 255.8h0M90.7 254.9h0M90.7 252.4h0M90.8 252.1h0M91.4 250.9h0M91.4 250.8h0M91.8 250h0M91.9 254.1h0M91.9 255.5h0M92.4 269.4h0M92.4 269.6h0M92.4 268.8h0M93 270.6h0M93 270.1h0M93.7 272.3h0M93.8 279.4h0M93.9 278.7h0M93.9 273.6h0M94 273.9h0M94.5 278.6h0M94.6 283.1h0M94.6 283.7h0M94.7 279.2h0M94.8 280.4h0M95.1 281.7h0M95.1 281.4h0M96 285h0M96 285.2h0M96 285.2h0M96.9 289.3h0M96.9 294.5h0M96.9 294.7h0M97 290.5h0M97.4 292.7h0M97.5 297.1h0M97.5 297.9h0M97.6 292.6h0M98.3 295.1h0M98.3 294.6h0M98.7 296h0M98.7 296.1h0M98.9 296.6h0M99.3 300.4h0M99.3 305.8h0M99.3 306.2h0M99.3 301.1h0M99.5 302.7h0M100.2 303.2h0M100.2 303.3h0M100.9 303.8h0M101 304.8h0M101 370h0M101 304.8h0M101.1 306.3h0M101.5 315.3h0M101.5 370.5h0M101.5 315.3h0M101.7 320.3h0M102.2 324.3h0M102.2 329.4h0M102.4 329.8h0M102.4 325.1h0M102.5 326h0M103.5 334h0M103.8 333.8h0M103.9 339.2h0M103.9 339.6h0M103.9 334.2h0M105.2 333.4h0M105.2 340.3h0M105.3 340.5h0M105.3 334.9h0M107.2 339.5h0M107.4 340.9h0M107.4 355.4h0M107.6 353.7h0M107.6 341.6h0M108.2 345.3h0M109.2 357.3h0M109.6 357.5h0M109.6 365.4h0M109.7 365.6h0M109.7 356.8h0M111.2 357.5h0M111.9 364.7h0M111.9 373.1h0M112 373h0M112 367.2h0M112.2 368.8h0M113.6 373.7h0M113.6 388.8h0M113.6 386.6h0M113.7 372.7h0M114.2 374.6h0M114.7 385.2h0M114.7 390.5h0M114.8 393.5h0M114.9 389.6h0M115 392.6h0M116.2 385.6h0M116.3 386.9h0M116.3 394.1h0M116.4 394.4h0M116.4 387.8h0M118 408.6h0M118.1 408.1h0M118.1 419.2h0M118.2 417.4h0M118.2 407.2h0M118.2 406.4h0M118.3 412h0M118.3 406.4h0M119.5 400.4h0M120.2 395.9h0M120.2 407.2h0M120.3 407.2h0M120.4 394.5h0M121 390.2h0M121.9 393.8h0M121.9 394.2h0M122.5 396.6h0M123.5 394h0M123.5 396.6h0M123.7 396.2h0M123.7 393.9h0M124 393h0M124.2 390.4h0M124.3 414h0M124.3 390.4h0M125.4 385.4h0M125.5 397.2h0M125.6 393.8h0M125.6 385h0M126.3 378.3h0M127 379.8h0M127.4 374.2h0M127.4 378.7h0M127.5 377.9h0M127.5 371.9h0M128.3 360.7h0M129 366.3h0M129.1 365.3h0M129.2 375.5h0M129.2 373.8h0M129.2 364.8h0M130.3 356.9h0M131.2 353.5h0M131.2 368.9h0M131.3 366.5h0M131.3 353h0M131.5 352.2h0M132.6 351.2h0M132.7 342.3h0M132.8 351.2h0M133.3 351h0M133.3 370.3h0M133.4 368.4h0M133.4 351.3h0M133.9 350.9h0M134.8 349.6h0M134.9 368.6h0M134.9 365.7h0M135 349.9h0M135.3 349.4h0M136.3 359.4h0M136.6 361.6h0M136.7 417h0M136.8 361.6h0M137 365h0M137.1 364.8h0M137.1 386.2h0M137.2 385.8h0M137.2 365.4h0M138.4 363.1h0M138.9 367.6h0M138.9 368.1h0M139.4 372.7h0M139.9 378.5h0M139.9 401.4h0M139.9 397.3h0M139.9 380.2h0M140 381.2h0M141 391.2h0M141.3 394.5h0M141.4 416.5h0M141.5 415.8h0M141.5 396.2h0M142 400.8h0M142.7 402.6h0M142.7 424.9h0M142.8 423h0M142.8 400.1h0M143.5 402h0M144.1 401.2h0M144.1 414.2h0M144.3 414.4h0M144.3 401.9h0M145 400.9h0M145.4 399.5h0M145.5 422h0M145.6 399.5h0M145.7 400.3h0M145.7 420.7h0M145.8 422.3h0M145.8 400.5h0M146.9 399.4h0M147 428.5h0M147 422.7h0M147 399h0M147 398.9h0M147.4 397.8h0M147.5 420h0M147.6 397.8h0M148 398.5h0M148 428h0M148.1 424.3h0M148.1 398.1h0M149 397.6h0M150.2 395.2h0M150.2 401.2h0M150.4 400.7h0M150.4 394.5h0M150.5 394.2h0M152 391.2h0M152.2 391.8h0M152.4 391.8h0M152.3 392.2h0M152.4 420h0M152.5 418.1h0M152.6 393.3h0M153.5 395.8h0M153.8 395.5h0M153.8 397h0M154.9 395.5h0M154.9 421.2h0M155.1 418.9h0M155.1 395h0M156 406.1h0M156.4 411.2h0M156.4 432.4h0M156.5 433.5h0M156.5 412h0M157 418.4h0M158 422.5h0M158.1 426.8h0M158.1 426.7h0M158.1 423.2h0M159 426.7h0M160.3 433.8h0M160.5 434.6h0M161 437.4h0M162.2 441.8h0M162.3 442.2h0M163 444.5h0M163.5 440.7h0M163.7 441.8h0M165 432.6h0M165.6 429.4h0M165.8 425.9h0M166.9 420h0M167.1 420h0M167 420.1h0M167.1 420.4h0M167.1 421.7h0M168.5 425.4h0M168.8 424.6h0M168.8 424.1h0M170 420.8h0M170.3 419.2h0M170.3 419.9h0M171 415.5h0M171.3 413.7h0M171.3 422.9h0M171.5 419.7h0M171.5 413.8h0M172 411h0M173 399h0M173.4 395.2h0M173.4 407.3h0M173.4 404h0M173.4 392.4h0M174 386.8h0M175 385.8h0M175 400.1h0M175 399.4h0M175.1 385.4h0M176 384.4h0M176.8 393h0M176.8 392.7h0M177.5 400.1h0M178.5 412.1h0M178.6 413h0M178.6 428h0M178.7 426.2h0M178.7 416.4h0M179.5 426.1h0M180.6 428.8h0M180.8 428.7h0M181.5 430.4h0M182.8 430.4h0M182.8 437.3h0M182.9 437.9h0M182.9 429.9h0M183.4 429h0M183.6 429h0M183.5 429.9h0M183.9 432.5h0M184 445h0M184.1 443.9h0M184.1 436h0M184.4 435h0M184.6 435h0M185 441.1h0M185.7 443.8h0M185.8 441.4h0M186.5 444.2h0M187.5 443.7h0M187.7 443.9h0M188.5 443.5h0M189.4 441.1h0M189.5 442.9h0M189.6 442.6h0M189.9 439h0M190 414h0M190.1 439h0M190.4 440.6h0M190.7 440.9h0M190.9 440h0M192.3 441.3h0M192.4 440.6h0M192.5 440.7h0M193.8 427.8h0M193.9 426.5h0M194 425.3h0M195 412.3h0M195.8 408.6h0M195.8 421.9h0M195.9 422h0M195.9 407.9h0M196.3 406.1h0M197.5 400.3h0M197.5 413.7h0M197.5 413.7h0M197.6 402.6h0M198.6 401.3h0M198.6 412.1h0M198.6 409.7h0M198.6 398.8h0M199 398.3h0M200.2 396.3h0M200.3 396.6h0M200.3 409.9h0M200.4 410.7h0M200.4 398.5h0M200.5 397h0M200.6 376h0M200.7 397h0M201 400h0M202 402h0M202.4 402h0M202.4 413.6h0M202.5 411.9h0M202.5 402.2h0M203.8 402.2h0M203.9 434.2h0M203.9 430.1h0M203.9 400h0M204 400h0M205.5 407.4h0M205.5 433.2h0M205.7 430.2h0M205.7 408.6h0M206 410.2h0M207.6 419.8h0M207.6 431.9h0M207.7 431.8h0M207.7 421.2h0M208 423.1h0M208.4 423h0M208.6 423h0M209.7 426.5h0M209.7 436.2h0M209.9 435.8h0M209.9 425.9h0M210 426.1h0M210.4 431h0M210.6 431h0M211 436.1h0M211 436.3h0M211.2 438.5h0M220.5 440.2h0M221 428.2h0M221.2 427.6h0M221.4 428h0M221.9 425.3h0M222.1 425.3h0M222.5 425h0M223.1 422.4h0M223.1 426h0M223.2 425h0M223.2 420.9h0M224 417h0M224.1 415.1h0M224.2 419.7h0M224.2 418.3h0M224.2 415.4h0M224.4 410.5h0M224.6 410.5h0M225 405.3h0M225.9 401.6h0M225.9 414.2h0M226 415h0M226.1 400.8h0M226.5 399h0M227.9 393.4h0M227.9 405h0M228.1 403.6h0M228.1 391.7h0M229.3 387h0M229.3 409.1h0M229.4 405.8h0M229.5 387.6h0M229.5 387.4h0M230.2 385.4h0M230.5 383h0M230.6 371h0M230.7 383h0M231 383.4h0M231.1 383.1h0M231.1 401.9h0M231.1 400.8h0M231.1 384.5h0M232 381h0M232.3 382.2h0M232.3 404.6h0M232.4 402.8h0M232.5 382.4h0M233.3 386.3h0M233.7 386.9h0M233.7 409.9h0M233.9 408.8h0M233.9 387.3h0M234.6 388.4h0M234.9 387.7h0M235 425h0M235.1 387.7h0M235.9 393.9h0M235.9 416.9h0M236 414.7h0M236 392.3h0M237 398.2h0M237.2 398.5h0M237.2 398.3h0M238.3 399.7h0M238.3 399.7h0M238.5 400h0M239.6 396h0M239.6 396.4h0M239.7 421.8h0M239.8 423.6h0M239.8 398.4h0M240.3 404.2h0M241 410.2h0M241.6 409.3h0M241.7 434.5h0M241.8 436h0M241.8 412.1h0M242.5 411.2h0M242.8 410.3h0M242.8 407.2h0M242.9 406.6h0M243.1 406.6h0M243.6 405.1h0M243.9 408.5h0M243.9 433.8h0M244 435.7h0M244.1 411.5h0M244.3 414.7h0M245 420.7h0M246 414.7h0M246 414.6h0M246 436.3h0M246.1 433.6h0M246.1 414.7h0M247 410.3h0M247.4 412.1h0M247.4 433.2h0M247.4 411.5h0M247.6 411.5h0M247.5 434.8h0M247.6 412.4h0M248 414.5h0M249 421.5h0M249.3 422.8h0M249.3 444.6h0M249.3 443.8h0M249.3 422.6h0M250 426.1h0M250.3 424.8h0M250.5 445.7h0M250.5 424.8h0M251.5 420.9h0M251.8 418.9h0M251.8 440.4h0M251.8 438h0M251.9 419.9h0M252.4 413.3h0M252.5 445h0M252.6 413.3h0M252.7 414.3h0M252.9 417.9h0M252.9 417.6h0M253.3 426h0M254 436h0M254.6 436.2h0M254.7 434.6h0M256 435.3h0M256.4 436.7h0M256.4 436.8h0M256.6 436.8h0M256.6 438.4h0M258 443.4h0M258 443.8h0M259.3 444.5h0M259.4 445h0M260 445.3h0M261.2 445.4h0M267.8 443.4h0M267.8 442.4h0M268 440.8h0M269.5 436.8h0M269.6 436.7h0M269.7 436.1h0M270.1 435.1h0M270.2 435.1h0M270.3 434.8h0M270.4 423h0M270.4 434.8h0M271 434.4h0M271.9 438.2h0M272.1 438.4h0M273.3 439.5h0M273.5 440.6h0M274 441.2h0M274.6 443.7h0M274.8 445h0M278.5 425h0M282.2 445.6h0M282.3 445h0M282.5 442.3h0M283 431.3h0M283.7 438.3h0M283.8 439.1h0M283.8 436.8h0M283.9 437.5h0M284.1 437.5h0M284.5 440h0M285.2 426.5h0M285.2 426.7h0M285.5 420.2h0M285.9 413h0M286 430h0M286.1 413h0M286.2 410.2h0M286.2 430.9h0M286.3 428h0M286.3 409.2h0M286.5 406.4h0M287 390.4h0M288.2 393.4h0M288.3 393.5h0M288.3 416.1h0M288.4 414.5h0M288.4 393.8h0M289.5 394.6h0M290.5 392.6h0M290.6 392.4h0M290.6 414.9h0M290.6 417h0M290.6 391.8h0M291.5 390.1h0M292 388.1h0M292 408.7h0M292.1 408.2h0M292.2 387.5h0M293 384.1h0M293.8 383.5h0M293.8 404.1h0M294 405.9h0M294 383.4h0M294.2 383.3h0M294.6 383h0M294.6 377h0M294.7 383h0M295 383.3h0M296.2 384h0M296.2 384.4h0M296.6 384.6h0M297.2 386.9h0M297.2 407h0M297.3 404.4h0M297.4 389.7h0M298.6 394.6h0M299.1 396.7h0M299.1 414.8h0M299.3 415.4h0M299.3 396.3h0M300.6 401.5h0M301.2 399h0M301.2 418.3h0M301.4 419.7h0M301.4 398.4h0M301.6 396h0M301.7 396h0M301.6 397.6h0M302.6 391.6h0M303.2 387h0M303.2 405.9h0M303.3 403.6h0M303.3 385.4h0M303.6 383h0M304.6 379.9h0M304.6 375h0M304.7 379.9h0M305 380h0M305 379.2h0M306 377.2h0M307 378.5h0M307 378.8h0M307.6 379.5h0M308.7 384.5h0M309 385.5h0M309 389.1h0M309.1 389.2h0M309.1 385.8h0M309.7 388.1h0M310.1 387.2h0M310.2 401.3h0M310.3 398.8h0M310.3 388.6h0M311.7 385.9h0M312.4 384.4h0M312.4 396.7h0M312.6 397h0M312.6 383.6h0M313.7 381.1h0M313.8 392h0M313.8 390.2h0M313.8 379.5h0M314 379.1h0M314.9 378.7h0M314.9 401.1h0M315 400.6h0M315 378.7h0M316 378.2h0M316.8 377.8h0M316.9 395.3h0M316.9 393.9h0M317 377.7h0M318 377.2h0M319.1 377.2h0M319.1 396.6h0M319.3 393.2h0M319.3 377.4h0M319.7 377.4h0M320.8 380h0M320.8 384.8h0M321 384.7h0M321 381.6h0M322.5 382.8h0M322.6 389.1h0M322.7 388.4h0M322.7 382.1h0M323.7 382.8h0M324.7 387.4h0M324.7 421.1h0M324.9 418.4h0M324.9 388.2h0M325 388.7h0M326 392.7h0M326.2 392.6h0M326.2 426.4h0M326.2 426.9h0M326.3 391.9h0M327.5 391.1h0M328.3 390h0M328.3 405h0M328.4 404.8h0M328.5 391.9h0M329 391.2h0M330 396.2h0M330.4 397.8h0M330.4 410.6h0M330.5 410.9h0M330.6 396.8h0M330.9 398h0M331.1 398h0M331 398.6h0M332.3 399.1h0M332.4 413.6h0M332.4 411.4h0M332.4 401.4h0M333.4 401.7h0M333.4 422.5h0M333.5 419.7h0M333.5 399.5h0M333.7 399.5h0M334.8 405.4h0M334.8 428.5h0M335 425.2h0M334.9 406h0M335.1 406h0M335 406h0M336 400h0M336.6 396.2h0M336.7 429.3h0M336.7 429.1h0M336.7 398.4h0M337 396.6h0M338.4 395.9h0M338.4 426.4h0M338.5 420.5h0M338.5 395.5h0M339 395.2h0M340 384.2h0M340 384.1h0M340 392.2h0M340.1 390.1h0M340.1 381.9h0M341 376.6h0M341.6 372.8h0M341.6 382.6h0M341.8 380.5h0M341.8 371.4h0M342 370.4h0M343.7 360.9h0M343.7 384.7h0M343.8 386.2h0M343.8 362.9h0M345 366.8h0M345.1 366.8h0M345.1 374.2h0M345.2 373.3h0M345.2 367.4h0M346 368.2h0M346.9 363.9h0M346.9 394.5h0M347 388.9h0M347 360.5h0M347 360.4h0M348 356.4h0M349.1 355.4h0M349.2 388.8h0M349.3 389.8h0M349.3 355.6h0M349.6 355.3h0M350.1 356.9h0M350.2 436h0M350.2 356.9h0M350.8 359.9h0M350.8 378.9h0M350.9 380h0M351 360.4h0M351 360.5h0M351.9 364h0M351.9 383.4h0M352 382h0M352 364.6h0M352 364.7h0M353 369.7h0M353.4 371.2h0M353.4 390.3h0M353.5 388.3h0M353.5 373.7h0M354 375.8h0M354.6 378.1h0M354.6 386h0M354.7 386.9h0M354.7 378.2h0M355 379.5h0M356.6 384.4h0M356.6 405.9h0M356.7 406.7h0M356.7 382.7h0M357 383.6h0M358.2 383h0M358.4 383h0M358.8 383.6h0M358.8 394.9h0M358.9 392.6h0M359 384.2h0M359 384.2h0M360 395.2h0M360.4 396.1h0M360.4 410.5h0M360.5 410.4h0M360.6 396h0M361.5 398.4h0M362.1 399.4h0M362.1 420.3h0M362.2 418.5h0M362.2 400.1h0M362.7 400.8h0M364 397.8h0M364.1 397.4h0M364.1 397.8h0M365 395.3h0M365.7 393.9h0M365.7 399.6h0M365.8 399.1h0M365.8 392.5h0M366.5 391.1h0M366.7 390.7h0M366.7 391.1h0M368 388.6h0M368.3 388.7h0M368.3 414.1h0M368.3 409.2h0M368.4 388.2h0M369.5 388.8h0M369.5 420.7h0M369.6 422.4h0M369.6 391h0M370 391.2h0M371 390.2h0M371.3 388h0M371.4 375h0M371.4 388h0M371.7 390.2h0M371.7 388.1h0M371.8 388.1h0M372.4 388.1h0M373.5 387h0M373.5 420h0M373.6 421.8h0M373.6 387.5h0M374.4 386.7h0M375 387.8h0M375 420.3h0M375.2 414.6h0M375.2 387.6h0M376 389.1h0M376.8 389.7h0M376.8 418.3h0M376.9 413.8h0M376.9 392.2h0M377.4 392.5h0M378.5 389.5h0M378.8 388.7h0M378.8 397.3h0M378.9 396h0M378.9 386.3h0M379.4 384.6h0M380.3 382.3h0M380.3 393h0M380.5 393.3h0M380.5 384.2h0M380.6 383.9h0M381.8 380.9h0M382 383h0M382 391.3h0M382.1 391.6h0M382.1 383.1h0M382.6 388.3h0M383.4 396.3h0M383.5 396.4h0M383.5 394.1h0M384.3 395h0M384.4 395h0M385.5 396h0M385.6 395.3h0M385.6 406.4h0M385.6 404h0M385.7 394.5h0M386.5 384.5h0M386.7 383.8h0M386.7 399.9h0M386.8 397h0M386.8 383h0M387.4 381h0M387.5 410h0M387.6 381h0M388.3 378.7h0M388.3 401.9h0M388.4 399.1h0M388.4 378.7h0M388.5 378.4h0M389.9 377.2h0M390 428h0M390.1 377.2h0M390.5 377.5h0M390.5 400.3h0M390.6 395.3h0M390.7 375.3h0M391.5 364.3h0M392.2 361.6h0M392.2 388.1h0M392.4 382.8h0M392.4 360.6h0M392.5 360.2h0M393 358.3h0M393 358.2h0M393.5 356h0M393.5 356h0M393.5 355.9h0M394.1 354.4h0M394.1 354.6h0M394.4 353.5h0M394.5 383h0M394.6 353.5h0M394.9 352.9h0M394.9 352.8h0M395.4 351.5h0M395.4 378.1h0M395.5 374h0M395.6 351.1h0M396 350.4h0M396 350.6h0M396.6 349.8h0M396.6 349.7h0M397.5 348.4h0M397.5 374.9h0M397.6 375.4h0M397.6 349h0M398 349.8h0M398 349h0M398.5 350h0M398.9 350.9h0M398.9 351.6h0M399.5 352.7h0M399.6 353.1h0M399.6 379.2h0M399.7 375.5h0M399.7 352.8h0M400.3 355h0M400.3 355.2h0M401 357.5h0M401 358.1h0M401.5 359.8h0M401.9 360.8h0M401.9 360.2h0M402.5 361.7h0M402.5 362.3h0M403.4 364h0M403.5 390h0M403.6 364h0M403.5 364.8h0M403.5 364.7h0M403.5 364h0M404.2 362.7h0M404.2 366.5h0M404.4 366.6h0M404.4 364.4h0M404.8 363.6h0M404.8 365.5h0M404.9 365h0M404.9 361.7h0M405.5 360.7h0M405.5 367.3h0M405.6 366.7h0M405.6 360.3h0M406.2 363.7h0M406.2 374.3h0M406.3 374.5h0M406.4 364.6h0M406.6 366.1h0M407 368.8h0M407 369.8h0M407.6 374.1h0M407.8 373.3h0M407.8 382.9h0M407.8 381.8h0M407.9 373.7h0M408.5 371.2h0M408.5 370.3h0M408.6 369.9h0M409.2 367.4h0M409.2 366.6h0M409.6 365.1h0M410 364.3h0M410 365.9h0M410.6 364.6h0M410.6 367.6h0M410.7 367.1h0M410.7 363h0M411 362.4h0M411.1 362.2h0M411.1 363.4h0M412.1 362.2h0M412.1 360.7h0M412.6 360.1h0M413 358.8h0M413 363.4h0M413.1 363h0M413.1 358.9h0M414.1 356h0M414.1 356.4h0M414.6 354.8h0M414.7 354.5h0M414.8 358.4h0M414.8 358.1h0M414.8 353.9h0M415.8 351.5h0M415.8 351.1h0M416.5 349.3h0M416.5 355.9h0M416.6 355.9h0M416.6 349.4h0M416.6 349.4h0M417.4 346h0M417.4 346.3h0M418 344.1h0M418 343.9h0M418.6 341.4h0M418.9 339.9h0M418.9 339.7h0M419.3 337.6h0M419.3 338.5h0M419.6 337.1h0M420.3 333.9h0M420.3 339.4h0M420.4 338.4h0M420.4 332.9h0M420.7 331.6h0M421 331.7h0M421 339.1h0M421.1 337.7h0M421.1 332.2h0M421.6 331.5h0M421.7 394.5h0M421.8 331.5h0M421.7 332.5h0M421.8 343.1h0M421.8 343.2h0M421.9 331.9h0M421.9 331.6h0M422 395h0M422.1 331.6h0M422.3 332.2h0M422.4 343.5h0M422.4 344.1h0M422.4 332.7h0M422.7 332.8h0M423.4 334.4h0M423.4 334.5h0M423.5 334.9h0M424.1 341.2h0M424.2 344.3h0M424.3 345.8h0M424.3 342.7h0M424.4 344h0M425 345.1h0M425 344.6h0M425.5 345.5h0M425.6 345.7h0M425.7 414h0M425.8 345.7h0M425.8 346.4h0M425.8 346.3h0M425.9 346.7h0M426 415h0M426.1 346.7h0M426.6 349h0M426.6 349.5h0M427 350.8h0M427.2 351.7h0M427.2 351.2h0M427.9 353.8h0M428 361.7h0M428 362.5h0M427.9 353.8h0M428 421h0M428.1 353.8h0M428 355.9h0M428.6 358.1h0M428.6 357.2h0M429 358.7h0M429.1 358.9h0M429.1 368.3h0M429.2 368h0M429.2 358.8h0M429.8 359.9h0M429.8 359.7h0M430.6 361.4h0M430.7 371.3h0M430.8 369.5h0M430.8 361.3h0M431 361.8h0M431.2 362.5h0M431.2 362.6h0M432 365.2h0M432 371.4h0M432.2 372h0M432.2 365.7h0M432.6 367h0M432.6 369.5h0M432.7 370.1h0M432.7 368.3h0M433 369.1h0M433.6 371.4h0M433.6 374.9h0M433.7 374.5h0M433.7 371h0M434.3 373.5h0M434.3 373.4h0M434.5 374h0M435 376.2h0M435.1 380.7h0M435.2 381.6h0M435.2 376.8h0M435.7 379h0M435.8 384.8h0M435.9 385.9h0M435.9 379.8h0M436 380.1h0M436.5 380.7h0M436.5 381.4h0M437 381.9h0M437 389.9h0M437.1 390h0M437.2 381.4h0M437.7 382h0M437.9 380.7h0M437.9 381.5h0M438.4 378.3h0M438.4 378.8h0M438.4 377.1h0M438.6 377.1h0M438.5 378.2h0M438.5 377h0M439 374.1h0M439.1 373.1h0M439.1 373.8h0M439.9 362.2h0M439.9 368h0M440 367.3h0M440 360.2h0M440.7 328.5h0M440.8 328.6h0M440.8 328.7h0M440.9 328.3h0M441 385h0M441.1 328.3h0M441.4 329.3h0M441.4 328.8h0M441.9 329.1h0M442 399h0M442.1 329.1h0M442.1 329.4h0M442.1 329.8h0M442.7 330.3h0M442.7 332.6h0M442.8 332.5h0M442.8 330.7h0M443 330.9h0M443.3 331h0M443.3 331.3h0M444.1 331.7h0M444.1 331h0M444.7 331.3h0M444.7 330.9h0M445 331.1h0M445.2 332.8h0M445.2 335.8h0M445.3 337h0M445.3 334.6h0M446 342.3h0M446.1 342.4h0M446.1 347.3h0M446.1 347.2h0M446.2 344.1h0M446.6 345.3h0M446.6 344.3h0M447.5 346.4h0M447.5 346.3h0M447.8 346.5h0M447.8 379h0M447.9 346.5h0M448 347.6h0M448.1 347.1h0M448.1 351.6h0M448.2 349.7h0M448.2 347h0M449 341.7h0M449 341.5h0M449 345h0M449.1 343.3h0M449.1 340.5h0M449.8 331.7h0M449.8 333.3h0M449.9 333h0M449.9 330.1h0M450.5 330.5h0M450.5 330.7h0M451 331h0M451 337.3h0M451.2 336.4h0M451.2 332.5h0M451.5 332.7h0M451.7 332.7h0M451.7 332h0M451.9 331h0M452 321h0M452.1 331h0M452.1 332h0M452.1 331.3h0M452.5 331.3h0M452.7 331.9h0M452.7 336.7h0M452.8 336.3h0M452.8 332.4h0M453 333.1h0M453.2 334h0M453.2 333.9h0M453.7 336.4h0M453.7 337.8h0M453.8 336.6h0M453.8 398h0M453.9 336.6h0M454.2 339.7h0M454.2 339.2h0M454.7 341.4h0M454.7 342.4h0M455 343.9h0M455 344h0M455 345.2h0M455.2 346.4h0M455.2 344.1h0M455.6 346.4h0M455.6 346.6h0M456.4 351.7h0M456.4 351.1h0M457 354.8h0M457.1 354.6h0M457.1 354.7h0M457.6 351.3h0M457.6 426h0M457.7 351.3h0M457.9 350.3h0M457.9 351.4h0M458.6 347.8h0M458.6 346.6h0M459 344.4h0M459.3 343.5h0M459.3 343.4h0M460 340.8h0M460 340.8h0M460.8 338.1h0M460.8 341h0M460.8 340.3h0M460.9 337.7h0M461 337.2h0M461.7 335.8h0M461.7 338.8h0M461.7 338.7h0M461.8 336.5h0M462.4 335.3h0M462.4 337.4h0M462.4 337.3h0M462.4 334.4h0M462.8 333.2h0M462.9 402h0M462.9 333.2h0M463 333.3h0M463.1 333.2h0M463.1 333.1h0M463.6 332.8h0M463.6 332.9h0M464.4 332.4h0M464.4 332.3h0M465.2 331.8h0M465.2 331.6h0M465.5 331.4h0M465.5 331.4h0M466 331.1h0M466 331h0M466 331.7h0M466.5 331h0M466.5 333.2h0M466.7 333h0M466.7 332.1h0M467.1 331.5h0M467.1 330h0M467.5 329.4h0M467.5 329.8h0M467.6 329.6h0M467.7 329h0M468 328.5h0M468.5 328.2h0M468.5 330.5h0M468.6 330h0M468.7 329.2h0M469.1 328.9h0M469.1 329.2h0M469.5 329h0M469.5 328.9h0M469.5 327.4h0M469.9 326.5h0M470 323h0M470.1 326.5h0M470.1 326.9h0M470.1 327.1h0M470.5 326.6h0M470.6 326.8h0M470.6 326.2h0M471 327.1h0M471.1 327.4h0M471.1 329.2h0M471.6 331.2h0M471.7 420h0M471.8 331.2h0M471.8 333.8h0M471.8 332.1h0M472 333.2h0M472.2 335.4h0M472.3 380h0M472.4 335.4h0M472.4 336.5h0M472.4 338.7h0M472.5 339h0M472.5 336.9h0M473 341h0M473.3 337.4h0M473.3 337.4h0M473.8 332.5h0M473.8 333.5h0M474 331h0M474.5 325.5h0M474.6 326.9h0M474.7 325.6h0M474.7 324h0M475 320.9h0M475.2 320.1h0M475.2 319.3h0M476 316.1h0M476 316.2h0M476.6 313.7h0M476.7 317.7h0M476.8 317.3h0M476.9 312.7h0M477 312.1h0M477.5 306.5h0M477.5 306.9h0M478 301.5h0M478.2 300.1h0M478.2 300.1h0M478.8 295.1h0M478.8 294.5h0M479.4 289h0M479.6 290h0M479.6 290.1h0M480.1 293.7h0M480.1 294.2h0M480.2 294.7h0M480.8 296.8h0M480.8 296.2h0M481 297.1h0M481.3 295.8h0M481.3 296h0M481.9 293.5h0M482 297.9h0M482.1 296.7h0M482.1 293.7h0M482.7 291.4h0M482.7 291.7h0M483 290.4h0M483.5 290.8h0M483.5 289.5h0M484.2 290h0M484.2 291.6h0M484.5 291.8h0M485 290.2h0M485 289.4h0M485.6 287.6h0M485.6 286.9h0M486 285.8h0M486.5 293.7h0M486.5 300h0M486.5 300.7h0M486.5 295.4h0M486.6 296.4h0M486.9 298.6h0M486.9 304.9h0M487 306.1h0M487 300.5h0M487.7 302.2h0M487.7 301.1h0M488.3 302.5h0M488.4 372.5h0M488.4 302.5h0M488.5 303h0M488.5 304.4h0M489 305.7h0M489.2 305.8h0M489.2 309.8h0M489.4 308.7h0M489.4 304.3h0M490 304.5h0M490 306.2h0M490.4 306.4h0M490.5 310h0M490.5 308.9h0M490.5 304.9h0M490.9 305.1h0M490.9 305.4h0M491.4 305.6h0M491.4 310.3h0M491.5 310.4h0M491.5 304.9h0M492 305h0M492.3 304.7h0M492.3 306h0M492.7 305.6h0M492.7 304.7h0M493.1 304.4h0M493.1 304.1h0M493.6 303.6h0M493.6 305h0M494 304.6h0M494.2 304.6h0M494.2 306.1h0M494.3 305.5h0M494.3 303.5h0M494.8 303.5h0M494.8 303h0M495.3 303h0M495.3 303h0M495.8 303h0M495.8 303.3h0M496 303.3h0M496.2 303.2h0M496.2 307.4h0M496.3 307.2h0M496.3 303.1h0M497 302.8h0M497 302.6h0M497.8 302.2h0M497.8 302.4h0M498 302.2h0M498.4 302h0M498.4 302.1h0M498.9 301.9h0M498.9 306.1h0M498.9 305.6h0M499 302.2h0M499.7 301.8h0M499.7 302.5h0M500 302.4h0M500.3 302.5h0M500.3 302.4h0M501 302.6h0M501 301.4h0M501.9 301.6h0M501.9 302h0M502.5 302.2h0M502.5 302.4h0M502.5 302.2h0M503.4 306.4h0M503.4 307.3h0M503.7 309.1h0M503.8 309.2h0M503.8 308.6h0M504.2 308.8h0M504.2 308.7h0M504.6 308.4h0M504.6 365h0M504.7 308.4h0M504.7 309h0M504.7 310.5h0M505.4 310.8h0M505.4 309.3h0M505.4 308.9h0M505.5 376.5h0M505.6 308.9h0M505.8 309h0M505.8 376.4h0M505.9 309h0M505.8 309.5h0M505.9 309.3h0M505.9 309.2h0M506.7 307.9h0M506.7 311.7h0M506.8 311.4h0M506.8 309.3h0M507.3 308.5h0M507.3 308.5h0M507.5 308.1h0M507.7 310.2h0M507.7 308.4h0M508.1 313.1h0M508.1 313.4h0M508.3 315.6h0M508.8 318.4h0M508.8 318.6h0M509.5 323h0M509.5 322.3h0M509.7 323.5h0M510 325h0M510 329.2h0M510.1 329.4h0M510.1 325.9h0M510.8 329.1h0M510.8 332.9h0M510.9 334h0M510.9 330.8h0M511.3 332.6h0M511.3 331.4h0M511.3 331.8h0M511.4 343.5h0M511.4 331.8h0M511.4 331.9h0M511.7 332h0M511.7 333h0M512.1 333.1h0M512.1 333.2h0M512.7 333.4h0M512.7 332.9h0M513.2 333.1h0M513.2 333.3h0M513.4 333.3h0M514 332.6h0M514 332.2h0M514.8 331.1h0M514.8 330.7h0M515.6 329.6h0M515.6 330.5h0M515.9 330.1h0M516.3 334.9h0M516.3 334.3h0M516.7 338.6h0M516.8 338.8h0M516.8 340.9h0M516.9 340.8h0M516.9 339h0M517.7 340.7h0M517.8 342.8h0M517.9 342.8h0M518 341.5h0M518.3 342.2h0M518.3 342.3h0M518.4 342.5h0M518.9 343.5h0M518.9 343.7h0M519.5 344.9h0M519.5 346.3h0M519.5 346.4h0M519.6 344.3h0M520.1 345.4h0M520.1 347.8h0M520.7 348.9h0M520.7 346.5h0M520.9 347h0M521.1 346.9h0M521.1 347.2h0M521.4 346.6h0M521.4 359.2h0M521.4 346.6h0M521.6 347h0M521.6 347.2h0M522.1 347.1h0M522.1 348.7h0M522.5 348.5h0M522.5 348.6h0M522.7 348.3h0M522.7 347.5h0M523.2 347.4h0M523.2 348.4h0M523.4 348.2h0M523.4 346.6h0M523.4 346.6h0M524 346h0M524 347.5h0M524.5 347h0M524.6 347.3h0M524.7 346.9h0M524.8 345.2h0M525.1 344.9h0M525.1 346.8h0M525.2 346.8h0M525.2 344.8h0M525.4 344.6h0M525.6 345.3h0M525.6 353.6h0M525.8 355h0M525.8 346.2h0M526.2 347.5h0M526.2 347.3h0M526.5 348.6h0M526.5 348.3h0M526.9 349.6h0M526.9 349.8h0M527.5 351.7h0M527.7 352.4h0M527.7 355.1h0M527.9 355.4h0M527.9 354h0M528.7 356.6h0M528.7 357.8h0M529.1 358.9h0M529.1 356.6h0M529.2 356.9h0M529.2 357.1h0M529.3 426h0M529.3 357.1h0M529.6 358.4h0M529.6 365h0M529.7 365h0M529.7 358.8h0M530.3 361.2h0M530.3 362.1h0M530.9 364.3h0M531 364.7h0M531 365.7h0M531.9 368.1h0M531.9 367.5h0M532.4 369h0M532.4 367.9h0M532.6 368.6h0M532.9 369.2h0M532.9 370.7h0M533.3 371.5h0M533.3 376.6h0M533.4 375.9h0M533.4 370.3h0M533.8 371.2h0M533.8 371h0M534.2 371.8h0M534.6 373h0M534.6 373.4h0M535.3 375.3h0M535.3 376.7h0M535.4 376.9h0M535.7 376.1h0M535.7 374.9h0M536 373.1h0M536 442.5h0M536 373.1h0M536.3 372.9h0M536.3 373h0M537 370.8h0M537 370.7h0M537 371.2h0M537.6 369.8h0M537.6 368.9h0M538.3 367.4h0M538.3 368.3h0M538.8 367.2h0M538.8 366.2h0M539.2 365.3h0M539.4 363.8h0M539.4 370.3h0M539.5 369.1h0M539.5 363h0M540 359h0M540 377.6h0M540 359h0M540.2 358.4h0M540.2 364.7h0M540.3 363.8h0M540.3 359.2h0M540.4 358.3h0M541 354.5h0M541.1 360.2h0M541.1 358.6h0M541.1 351.9h0M541.6 349h0M541.6 349.1h0M541.7 348.4h0M542.2 344.8h0M542.2 345.6h0M542.6 342.7h0M543.1 339.3h0M543.1 338.7h0M543.7 333.7h0M543.8 332.6h0M543.8 332.7h0M544.3 326.9h0M544.3 326.6h0M544.7 322.6h0M544.9 322.9h0M544.9 325.2h0M544.9 325.3h0M545 323.3h0M545.8 324.9h0M545.8 324.9h0M545.9 325.1h0M546.2 323.9h0M546.2 397.6h0M546.2 323.9h0M546.4 323.3h0M546.4 325.5h0M546.5 325.3h0M546.5 323.6h0M546.7 322.8h0M547.1 324h0M547.1 312.6h0M547.1 324h0M547.3 325.7h0M547.3 327.2h0M547.5 328h0M547.5 326.2h0M548.1 328.6h0M548.2 328.7h0M548.2 330.3h0M548.6 331h0M548.6 329.2h0M549.2 330.3h0M549.2 330.8h0M549.6 331.5h0M549.6 332.5h0M550.1 333.3h0M550.4 332.4h0M550.4 339.5h0M550.5 338.7h0M550.5 331.2h0M551.3 328.8h0M551.3 329.7h0M551.8 328.3h0M552.1 327h0M552.1 326.7h0M552.5 325.1h0M552.5 324h0M553.2 320.9h0M553.2 329.5h0M553.2 327.8h0M553.3 320.6h0M553.4 320.1h0M554 318.7h0M554 318.7h0M554.7 317.1h0M554.7 317.1h0M554.7 318.7h0M555.1 316.5h0M555.1 305h0M555.1 316.5h0M555.3 318h0M555.3 316.4h0M555.5 316.1h0M555.9 316.1h0M556 315.7h0M556 316.4h0M556.4 315.3h0M556.4 317.8h0M556.5 317.3h0M556.5 314.2h0M557.1 312.5h0M557.1 313.1h0M557.6 311.7h0M557.9 310.8h0M557.9 314.8h0M558 314.1h0M558.1 309.8h0M558.8 307.3h0M558.8 308.3h0M559.3 306.4h0M559.3 306.3h0M559.3 305h0M559.7 303.9h0M559.7 304h0M560.1 302.9h0M560.1 311.5h0M560.2 311.4h0M560.2 302.3h0M560.6 300.9h0M560.6 301.2h0M560.9 300.4h0M561.1 299.8h0M561.1 299.4h0M561.7 297.1h0M561.7 297.6h0M562.1 295.9h0M562.1 295.7h0M562.6 293.7h0M562.8 293.4h0M562.8 293.9h0M563.1 292.9h0M563.1 361.4h0M563.1 292.9h0M563.5 293.2h0M563.6 294.7h0M563.7 294.3h0M563.7 292.6h0M564.3 292h0M564.5 291.9h0M564.5 293.8h0M564.5 293.9h0M564.6 291.9h0M565.1 291.5h0M565.1 291.5h0M565.2 291.4h0M565.6 290.5h0M565.6 284.2h0M565.6 290.5h0M565.7 290.8h0M565.7 290.8h0M566 290.4h0M566.5 290.9h0M566.5 290.6h0M566.8 290.9h0M567 291.1h0M567 291.3h0M567.5 291.7h0M567.5 292.4h0M568.2 293.2h0M568.2 294.5h0M568.2 294.8h0M568.3 293.8h0M568.4 294h0M569.1 296h0M569.1 302h0M569.3 303.1h0M569.3 295.4h0M569.8 296.7h0M569.8 296.8h0M570.1 297.8h0M570.5 297.3h0M570.5 298.6h0M571.2 297.7h0M571.2 297.4h0M571.3 297.4h0M571.3 296h0M572 295.2h0M572 295.5h0M572.1 295.4h0M572.5 297.2h0M572.5 296.9h0M573 299.3h0M573 306.9h0M573.1 306h0M573.1 300h0M573.5 301.9h0M573.7 302.4h0M573.7 306h0M573.9 306.5h0M573.9 302.9h0M574.4 304.3h0M574.4 307.9h0M574.6 307.9h0M574.6 304.7h0M575.1 305.9h0M575.1 310.6h0M575.2 310h0M575.2 306.6h0M575.8 307.1h0M575.9 309.5h0M576 309.8h0M576 306.8h0M576.1 306.8h0M576.1 374.7h0M576.1 306.8h0M576.7 307.3h0M576.7 313.2h0M576.8 312.5h0M576.8 307.5h0M577.1 307.7h0M577.5 309.8h0M577.6 314.3h0M577.7 314.1h0M577.7 310.6h0M578.4 313.8h0M578.4 315.6h0M578.5 316.2h0M579 317.7h0M579 318.2h0M579.1 318.6h0M579.1 317h0M579.9 319.4h0M579.9 318.6h0M580.1 319.2h0M580.7 321.3h0M580.7 321.4h0M581.3 323.3h0M581.3 323.4h0M581.8 325.3h0M581.9 325.7h0M582 328.6h0M582.1 328.5h0M582.1 326.1h0M582.5 327.2h0M582.5 327.2h0M583 328.7h0M583 331.7h0M583 331.5h0M583 330.7h0M583.5 332h0M583.6 332.6h0M583.6 331.9h0M584.4 336.6h0M584.4 336h0M584.8 339h0M584.8 344.4h0M584.9 345.3h0M585 340h0M585.1 340.9h0M585.7 343.8h0M585.7 343.4h0M586.3 346.4h0M586.3 346.7h0M586.8 349.1h0M587.1 350.2h0M587.1 353.8h0M587.2 354.5h0M587.3 350.5h0M587.6 351.9h0M588.1 352.6h0M588.1 353.9h0M588.5 354.5h0M588.6 354h0M588.6 353.2h0M589.2 351.2h0M589.2 352.4h0M589.2 350.1h0M589.3 360h0M589.3 350.1h0M589.9 349.7h0M589.9 348.4h0M590.2 347.3h0M590.4 346.8h0M590.4 346.8h0M591.2 344.8h0M591.2 346.6h0M591.3 346.4h0M591.3 344h0M591.8 342.7h0M592 342.8h0M592 345.1h0M592.1 345.2h0M592.1 343.1h0M592.8 343.9h0M592.9 346h0M592.9 345.8h0M592.9 344h0M593.5 344.5h0M593.8 344h0M593.8 344.8h0M594.4 343.4h0M594.4 343.8h0M595.2 342.1h0M595.3 342.9h0M595.3 342.7h0M595.3 340.9h0M595.5 340.5h0M595.7 340.7h0M595.7 340.4h0M596.4 341.2h0M596.4 349.1h0M596.5 349.4h0" fill="none" stroke="#F2CC0C" stroke-width="1.3" stroke-linecap="round"/>
</g>
<g class="ax"><text x="25.5" y="447.4" text-anchor="end">3800</text><text x="25.5" y="435.7" text-anchor="end">3820</text><text x="25.5" y="424.1" text-anchor="end">3840</text><text x="25.5" y="412.5" text-anchor="end">3860</text><text x="25.5" y="400.9" text-anchor="end">3880</text><text x="25.5" y="389.3" text-anchor="end">3900</text><text x="25.5" y="377.7" text-anchor="end">3920</text><text x="25.5" y="366.1" text-anchor="end">3940</text><text x="25.5" y="354.5" text-anchor="end">3960</text><text x="25.5" y="342.9" text-anchor="end">3980</text><text x="25.5" y="331.3" text-anchor="end">4000</text><text x="25.5" y="319.7" text-anchor="end">4020</text><text x="25.5" y="308.1" text-anchor="end">4040</text><text x="25.5" y="296.4" text-anchor="end">4060</text><text x="25.5" y="284.8" text-anchor="end">4080</text><text x="25.5" y="273.2" text-anchor="end">4100</text><text x="25.5" y="261.6" text-anchor="end">4120</text><text x="25.5" y="250.0" text-anchor="end">4140</text><text x="25.5" y="238.4" text-anchor="end">4160</text><text x="25.5" y="226.8" text-anchor="end">4180</text><text x="25.5" y="215.2" text-anchor="end">4200</text><text x="25.5" y="203.6" text-anchor="end">4220</text><text x="25.5" y="192.0" text-anchor="end">4240</text><text x="25.5" y="180.4" text-anchor="end">4260</text><text x="25.5" y="168.8" text-anchor="end">4280</text><text x="25.5" y="157.1" text-anchor="end">4300</text><text x="25.5" y="145.5" text-anchor="end">4320</text><text x="25.5" y="133.9" text-anchor="end">4340</text><text x="25.5" y="122.3" text-anchor="end">4360</text><text x="25.5" y="110.7" text-anchor="end">4380</text><text x="25.5" y="99.1" text-anchor="end">4400</text><text x="25.5" y="87.5" text-anchor="end">4420</text><text x="25.5" y="75.9" text-anchor="end">4440</text><text x="25.5" y="64.3" text-anchor="end">4460</text><text x="25.5" y="52.7" text-anchor="end">4480</text><text x="25.5" y="41.1" text-anchor="end">4500</text><text x="25.5" y="29.5" text-anchor="end">4520</text><text x="25.5" y="17.9" text-anchor="end">4540</text><text x="54.6" y="452.8" text-anchor="middle" style="font-size:4.72px">2024-10</text><text x="99.5" y="452.8" text-anchor="middle" style="font-size:4.72px">2024-11</text><text x="143.0" y="452.8" text-anchor="middle" style="font-size:4.72px">2024-12</text><text x="187.9" y="452.8" text-anchor="middle" style="font-size:4.72px">2025-01</text><text x="232.9" y="452.8" text-anchor="middle" style="font-size:4.72px">2025-02</text><text x="273.4" y="452.8" text-anchor="middle" style="font-size:4.72px">2025-03</text><text x="318.4" y="452.8" text-anchor="middle" style="font-size:4.72px">2025-04</text><text x="361.9" y="452.8" text-anchor="middle" style="font-size:4.72px">2025-05</text><text x="406.8" y="452.8" text-anchor="middle" style="font-size:4.72px">2025-06</text><text x="450.3" y="452.8" text-anchor="middle" style="font-size:4.72px">2025-07</text><text x="495.2" y="452.8" text-anchor="middle" style="font-size:4.72px">2025-08</text><text x="540.1" y="452.8" text-anchor="middle" style="font-size:4.72px">2025-09</text><text x="583.6" y="452.8" text-anchor="middle" style="font-size:4.72px">2025-10</text>
<text transform="translate(6.4,231.1) rotate(-90)" text-anchor="middle" style="font-size:4.83px">mmH2O</text>
</g>
</svg>
<div class="legend">
<b style="left:3.7px;background:#5a9a55"></b><span style="left:12.1px;color:#8a8c96">Nekorigovaná výška vody ve studni</span>
<b style="left:91.1px;background:#F2CC0C"></b><span style="left:99.5px;color:#d5d5e2">Výška vody ve studni po korekci na barometrický tlak</span>
</div>
</div>
</body></html>
